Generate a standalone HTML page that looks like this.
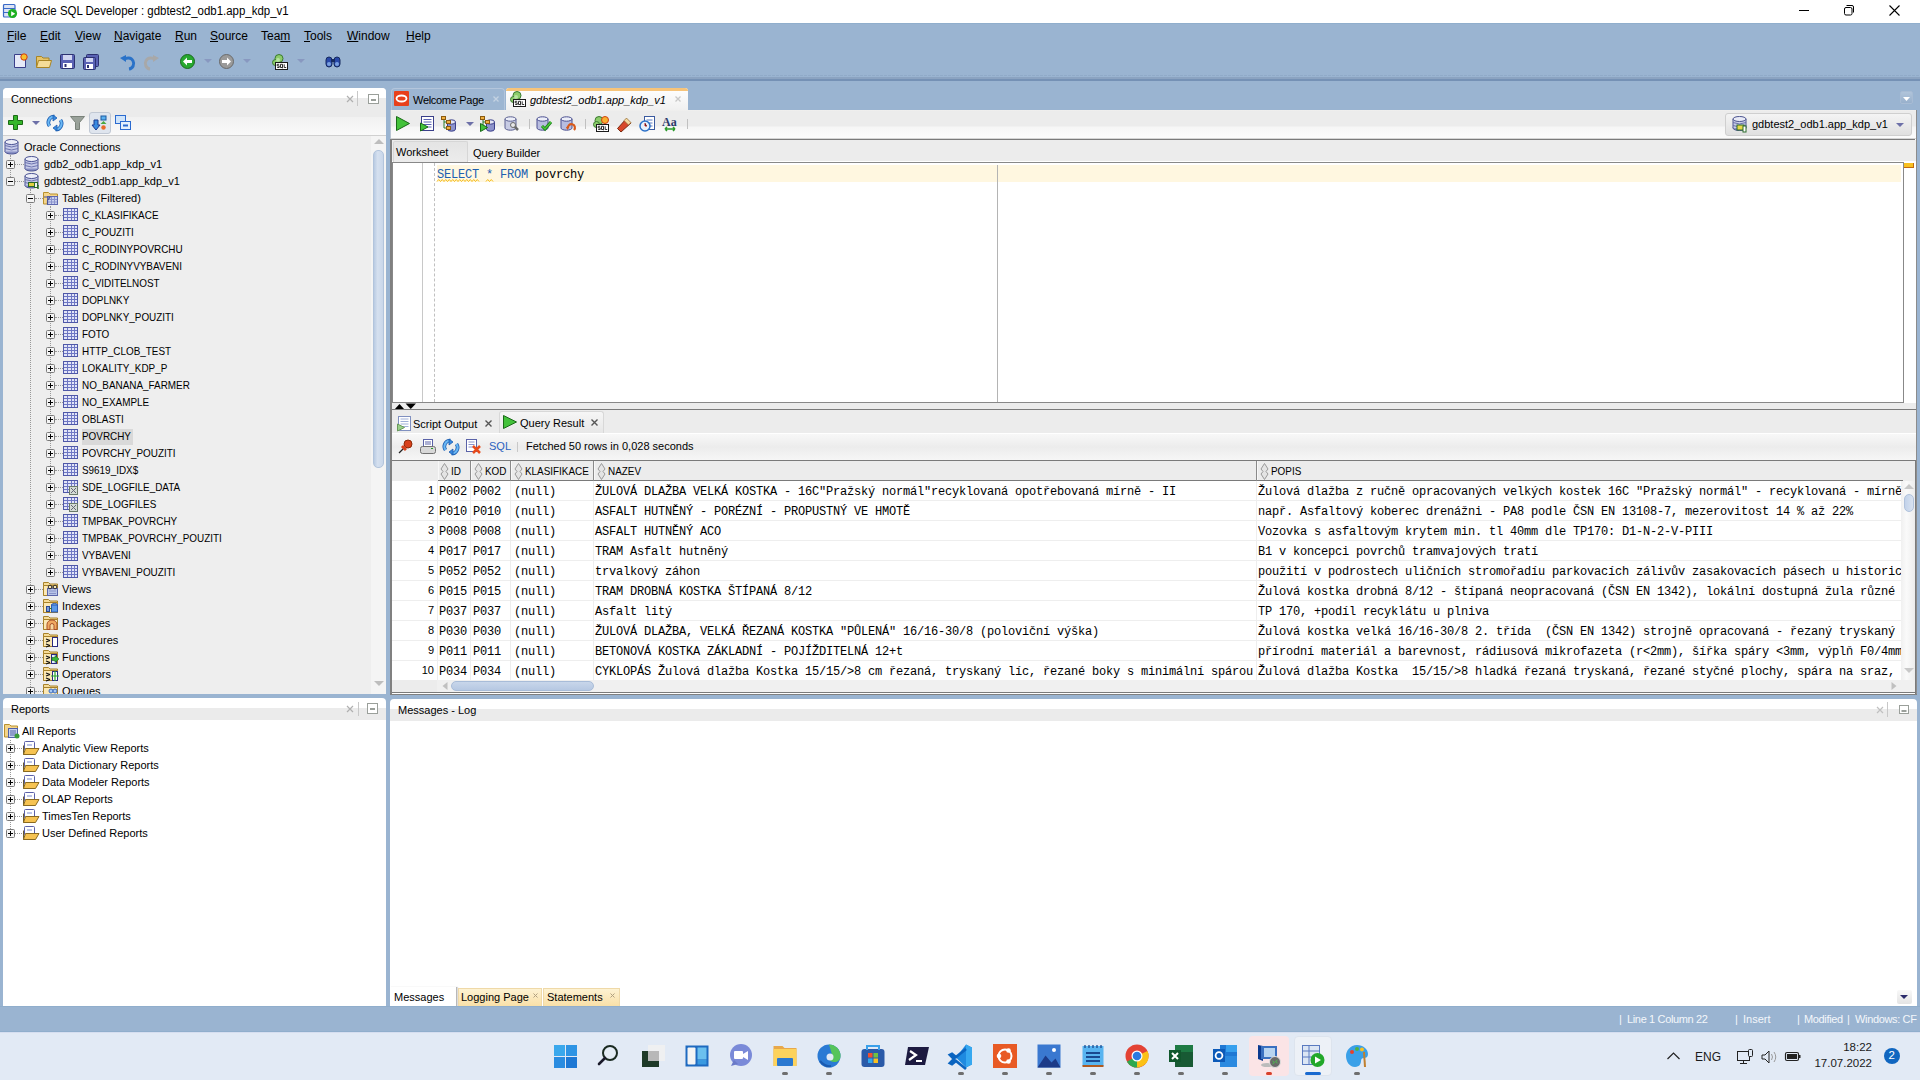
<!DOCTYPE html><html><head><meta charset="utf-8"><style>
*{margin:0;padding:0;box-sizing:border-box}
html,body{width:1920px;height:1080px;overflow:hidden;background:#9ab4d1;font-family:"Liberation Sans",sans-serif;font-size:11px;color:#000}
.a{position:absolute}
.t{position:absolute;white-space:nowrap;line-height:1}
.m{font-family:"Liberation Mono",monospace}
svg{position:absolute;overflow:visible}
u{text-decoration:underline;text-underline-offset:1px}
</style></head><body>
<div class="a" style="left:0px;top:0px;width:1920px;height:23px;background:#fff"></div>
<div class="a" style="left:0px;top:23px;width:1920px;height:1px;background:#90aecc"></div>
<svg style="left:2px;top:3px" width="18" height="18" viewBox="0 0 18 18"><rect x="1.5" y="1.5" width="11.5" height="12.5" rx="1" fill="#dde4f4" stroke="#3a6ac8" stroke-width="1.2"/><path d="M1.5 5.5h11.5M1.5 9.5h11.5" stroke="#3a6ac8" stroke-width="1.2"/><circle cx="10.5" cy="10.5" r="4.6" fill="#1eb020"/><path d="M9.2 8.2l4 2.5-4 2.5z" fill="#fff"/></svg>
<div class="t" style="left:23px;top:5.21px;font-size:12.5px;transform:scaleX(0.916);transform-origin:0 0">Oracle SQL Developer : gdbtest2_odb1.app_kdp_v1</div>
<div class="a" style="left:1799px;top:10px;width:10px;height:1px;background:#000"></div>
<svg style="left:1843px;top:4px" width="12" height="12" viewBox="0 0 12 12"><rect x="1.5" y="3.5" width="7.5" height="7.5" rx="1.5" fill="none" stroke="#000"/><path d="M3.5 1.5h5.5a1.5 1.5 0 0 1 1.5 1.5v5.5" fill="none" stroke="#000"/></svg>
<svg style="left:1889px;top:5px" width="12" height="12" viewBox="0 0 12 12"><path d="M0.5 0.5l10 10M10.5 0.5l-10 10" stroke="#000" stroke-width="1.1"/></svg>
<div class="t" style="left:7px;top:29.84px;font-size:12px;"><u>F</u>ile</div>
<div class="t" style="left:40px;top:29.84px;font-size:12px;"><u>E</u>dit</div>
<div class="t" style="left:75px;top:29.84px;font-size:12px;"><u>V</u>iew</div>
<div class="t" style="left:114px;top:29.84px;font-size:12px;"><u>N</u>avigate</div>
<div class="t" style="left:175px;top:29.84px;font-size:12px;"><u>R</u>un</div>
<div class="t" style="left:210px;top:29.84px;font-size:12px;"><u>S</u>ource</div>
<div class="t" style="left:261px;top:29.84px;font-size:12px;">Tea<u>m</u></div>
<div class="t" style="left:304px;top:29.84px;font-size:12px;"><u>T</u>ools</div>
<div class="t" style="left:347px;top:29.84px;font-size:12px;"><u>W</u>indow</div>
<div class="t" style="left:406px;top:29.84px;font-size:12px;"><u>H</u>elp</div>
<div class="a" style="left:0;top:75px;width:1920px;height:1px;background:repeating-linear-gradient(90deg,#90aac8 0 3px,#9ab4d1 3px 4px)"></div>
<div class="a" style="left:0px;top:77px;width:1920px;height:2px;background:#8ba3c1"></div>
<div class="a" style="left:0px;top:79px;width:1920px;height:2px;background:#7591b5"></div>
<div class="a" style="left:3px;top:88px;width:383px;height:606px;background:#eeeeee;border-radius:4px 4px 0 0;overflow:hidden"></div>
<div class="a" style="left:3px;top:88px;width:383px;height:10px;background:#fff;border-radius:4px 4px 0 0"></div>
<div class="a" style="left:3px;top:98px;width:383px;height:19px;background:#ebebeb"></div>
<div class="a" style="left:3px;top:117px;width:383px;height:18px;background:linear-gradient(#f1f1f1,#fafafa)"></div>
<div class="a" style="left:3px;top:135px;width:383px;height:1px;background:#d0d0d0"></div>
<div class="t" style="left:11px;top:93.98px;font-size:11px;">Connections</div>
<svg style="left:346px;top:95px" width="7" height="7" viewBox="0 0 7 7"><path d="M1 1l6 6M7 1l-6 6" stroke="#b0b0b0" stroke-width="1.2"/></svg>
<div class="a" style="left:357px;top:91px;width:1px;height:15px;background:#c8c8c8"></div>
<svg style="left:368px;top:94px" width="11" height="10" viewBox="0 0 11 10"><rect x="0.5" y="0.5" width="10" height="9" fill="#fff" stroke="#9a9f9a"/><rect x="3" y="5" width="5" height="2" fill="#9a9f9a"/></svg>
<div class="a" style="left:3px;top:136px;width:368px;height:558px;overflow:hidden">
<div class="a" style="left:7px;top:19px;width:1px;height:26px;border-left:1px dotted #999"></div>
<div class="a" style="left:27px;top:53px;width:1px;height:502px;border-left:1px dotted #999"></div>
<div class="a" style="left:47px;top:70px;width:1px;height:366px;border-left:1px dotted #999"></div>
<svg style="left:1px;top:3px" width="16" height="16"><ellipse cx="7.5" cy="12.5" rx="6.5" ry="2.5" fill="#8890c4" stroke="#4b5394"/><rect x="1" y="3" width="13" height="9.5" fill="#c5cae8"/><path d="M1 3v9.5M14 3v9.5" stroke="#4b5394"/><path d="M1 6.5q6.5 3 13 0M1 9.5q6.5 3 13 0" stroke="#6d74b0" fill="none"/><ellipse cx="7.5" cy="3" rx="6.5" ry="2.5" fill="#eceef8" stroke="#4b5394"/></svg>
<div class="t" style="left:21px;top:5.68px;font-size:11px;">Oracle Connections</div>
<div class="a" style="left:12px;top:28px;width:9px;height:1px;border-top:1px dotted #999"></div>
<svg style="left:3px;top:24px" width="9" height="9"><rect x="0.5" y="0.5" width="8" height="8" rx="1" fill="#f4f4f4" stroke="#7a7a7a"/><path d="M2 4.5h5" stroke="#000"/><path d="M4.5 2v5" stroke="#000"/></svg>
<svg style="left:21px;top:20px" width="16" height="16"><ellipse cx="7.5" cy="12.5" rx="6.5" ry="2.5" fill="#8890c4" stroke="#4b5394"/><rect x="1" y="3" width="13" height="9.5" fill="#c5cae8"/><path d="M1 3v9.5M14 3v9.5" stroke="#4b5394"/><path d="M1 6.5q6.5 3 13 0M1 9.5q6.5 3 13 0" stroke="#6d74b0" fill="none"/><ellipse cx="7.5" cy="3" rx="6.5" ry="2.5" fill="#eceef8" stroke="#4b5394"/></svg>
<div class="t" style="left:41px;top:22.68px;font-size:11px;">gdb2_odb1.app_kdp_v1</div>
<div class="a" style="left:12px;top:45px;width:9px;height:1px;border-top:1px dotted #999"></div>
<svg style="left:3px;top:41px" width="9" height="9"><rect x="0.5" y="0.5" width="8" height="8" rx="1" fill="#f4f4f4" stroke="#7a7a7a"/><path d="M2 4.5h5" stroke="#000"/></svg>
<svg style="left:21px;top:37px" width="16" height="16"><ellipse cx="7.5" cy="12.5" rx="6.5" ry="2.5" fill="#8890c4" stroke="#4b5394"/><rect x="1" y="3" width="13" height="9.5" fill="#c5cae8"/><path d="M1 3v9.5M14 3v9.5" stroke="#4b5394"/><path d="M1 6.5q6.5 3 13 0M1 9.5q6.5 3 13 0" stroke="#6d74b0" fill="none"/><ellipse cx="7.5" cy="3" rx="6.5" ry="2.5" fill="#eceef8" stroke="#4b5394"/><rect x="4.5" y="9.5" width="6" height="4" fill="#e0d040" stroke="#2a6a2a"/><rect x="10.5" y="9.5" width="3" height="5" fill="#f4f4f4" stroke="#2a6a2a"/><path d="M14 12v4" stroke="#2a6a2a" stroke-width="1.5"/></svg>
<div class="t" style="left:41px;top:39.68px;font-size:11px;">gdbtest2_odb1.app_kdp_v1</div>
<div class="a" style="left:32px;top:62px;width:8px;height:1px;border-top:1px dotted #999"></div>
<svg style="left:23px;top:58px" width="9" height="9"><rect x="0.5" y="0.5" width="8" height="8" rx="1" fill="#f4f4f4" stroke="#7a7a7a"/><path d="M2 4.5h5" stroke="#000"/></svg>
<svg style="left:40px;top:54px" width="16" height="16"><path d="M0.5 2.5h5l1.5 1.5h7.5v10h-14z" fill="#f4d58a" stroke="#b8902e"/><rect x="4.5" y="6.5" width="10" height="8" fill="#c8d0ee" stroke="#5f68b0"/><path d="M5 9.5h9M5 12h9M8.5 7v7M11.5 7v7" stroke="#8a92cc"/><path d="M1 7h6l-2.5 3.5v4" stroke="#4b5394" fill="none" stroke-width="1.2"/></svg>
<div class="t" style="left:59px;top:56.68px;font-size:11px;">Tables (Filtered)</div>
<div class="a" style="left:52px;top:79px;width:8px;height:1px;border-top:1px dotted #999"></div>
<svg style="left:43px;top:75px" width="9" height="9"><rect x="0.5" y="0.5" width="8" height="8" rx="1" fill="#f4f4f4" stroke="#7a7a7a"/><path d="M2 4.5h5" stroke="#000"/><path d="M4.5 2v5" stroke="#000"/></svg>
<svg style="left:60px;top:71px" width="16" height="16"><rect x="0.5" y="1.5" width="14" height="12" fill="#e2e5f8" stroke="#4f58a8"/><path d="M1 4.5h13M1 7.5h13M1 10.5h13M4.5 2v11M8.5 2v11M11.5 2v11" stroke="#6e77c4"/></svg>
<div class="t" style="left:79px;top:73.68px;font-size:11px;transform:scaleX(0.9);transform-origin:0 0;">C_KLASIFIKACE</div>
<div class="a" style="left:52px;top:96px;width:8px;height:1px;border-top:1px dotted #999"></div>
<svg style="left:43px;top:92px" width="9" height="9"><rect x="0.5" y="0.5" width="8" height="8" rx="1" fill="#f4f4f4" stroke="#7a7a7a"/><path d="M2 4.5h5" stroke="#000"/><path d="M4.5 2v5" stroke="#000"/></svg>
<svg style="left:60px;top:88px" width="16" height="16"><rect x="0.5" y="1.5" width="14" height="12" fill="#e2e5f8" stroke="#4f58a8"/><path d="M1 4.5h13M1 7.5h13M1 10.5h13M4.5 2v11M8.5 2v11M11.5 2v11" stroke="#6e77c4"/></svg>
<div class="t" style="left:79px;top:90.68px;font-size:11px;transform:scaleX(0.9);transform-origin:0 0;">C_POUZITI</div>
<div class="a" style="left:52px;top:113px;width:8px;height:1px;border-top:1px dotted #999"></div>
<svg style="left:43px;top:109px" width="9" height="9"><rect x="0.5" y="0.5" width="8" height="8" rx="1" fill="#f4f4f4" stroke="#7a7a7a"/><path d="M2 4.5h5" stroke="#000"/><path d="M4.5 2v5" stroke="#000"/></svg>
<svg style="left:60px;top:105px" width="16" height="16"><rect x="0.5" y="1.5" width="14" height="12" fill="#e2e5f8" stroke="#4f58a8"/><path d="M1 4.5h13M1 7.5h13M1 10.5h13M4.5 2v11M8.5 2v11M11.5 2v11" stroke="#6e77c4"/></svg>
<div class="t" style="left:79px;top:107.68px;font-size:11px;transform:scaleX(0.9);transform-origin:0 0;">C_RODINYPOVRCHU</div>
<div class="a" style="left:52px;top:130px;width:8px;height:1px;border-top:1px dotted #999"></div>
<svg style="left:43px;top:126px" width="9" height="9"><rect x="0.5" y="0.5" width="8" height="8" rx="1" fill="#f4f4f4" stroke="#7a7a7a"/><path d="M2 4.5h5" stroke="#000"/><path d="M4.5 2v5" stroke="#000"/></svg>
<svg style="left:60px;top:122px" width="16" height="16"><rect x="0.5" y="1.5" width="14" height="12" fill="#e2e5f8" stroke="#4f58a8"/><path d="M1 4.5h13M1 7.5h13M1 10.5h13M4.5 2v11M8.5 2v11M11.5 2v11" stroke="#6e77c4"/></svg>
<div class="t" style="left:79px;top:124.68px;font-size:11px;transform:scaleX(0.9);transform-origin:0 0;">C_RODINYVYBAVENI</div>
<div class="a" style="left:52px;top:147px;width:8px;height:1px;border-top:1px dotted #999"></div>
<svg style="left:43px;top:143px" width="9" height="9"><rect x="0.5" y="0.5" width="8" height="8" rx="1" fill="#f4f4f4" stroke="#7a7a7a"/><path d="M2 4.5h5" stroke="#000"/><path d="M4.5 2v5" stroke="#000"/></svg>
<svg style="left:60px;top:139px" width="16" height="16"><rect x="0.5" y="1.5" width="14" height="12" fill="#e2e5f8" stroke="#4f58a8"/><path d="M1 4.5h13M1 7.5h13M1 10.5h13M4.5 2v11M8.5 2v11M11.5 2v11" stroke="#6e77c4"/></svg>
<div class="t" style="left:79px;top:141.68px;font-size:11px;transform:scaleX(0.9);transform-origin:0 0;">C_VIDITELNOST</div>
<div class="a" style="left:52px;top:164px;width:8px;height:1px;border-top:1px dotted #999"></div>
<svg style="left:43px;top:160px" width="9" height="9"><rect x="0.5" y="0.5" width="8" height="8" rx="1" fill="#f4f4f4" stroke="#7a7a7a"/><path d="M2 4.5h5" stroke="#000"/><path d="M4.5 2v5" stroke="#000"/></svg>
<svg style="left:60px;top:156px" width="16" height="16"><rect x="0.5" y="1.5" width="14" height="12" fill="#e2e5f8" stroke="#4f58a8"/><path d="M1 4.5h13M1 7.5h13M1 10.5h13M4.5 2v11M8.5 2v11M11.5 2v11" stroke="#6e77c4"/></svg>
<div class="t" style="left:79px;top:158.68px;font-size:11px;transform:scaleX(0.9);transform-origin:0 0;">DOPLNKY</div>
<div class="a" style="left:52px;top:181px;width:8px;height:1px;border-top:1px dotted #999"></div>
<svg style="left:43px;top:177px" width="9" height="9"><rect x="0.5" y="0.5" width="8" height="8" rx="1" fill="#f4f4f4" stroke="#7a7a7a"/><path d="M2 4.5h5" stroke="#000"/><path d="M4.5 2v5" stroke="#000"/></svg>
<svg style="left:60px;top:173px" width="16" height="16"><rect x="0.5" y="1.5" width="14" height="12" fill="#e2e5f8" stroke="#4f58a8"/><path d="M1 4.5h13M1 7.5h13M1 10.5h13M4.5 2v11M8.5 2v11M11.5 2v11" stroke="#6e77c4"/></svg>
<div class="t" style="left:79px;top:175.68px;font-size:11px;transform:scaleX(0.9);transform-origin:0 0;">DOPLNKY_POUZITI</div>
<div class="a" style="left:52px;top:198px;width:8px;height:1px;border-top:1px dotted #999"></div>
<svg style="left:43px;top:194px" width="9" height="9"><rect x="0.5" y="0.5" width="8" height="8" rx="1" fill="#f4f4f4" stroke="#7a7a7a"/><path d="M2 4.5h5" stroke="#000"/><path d="M4.5 2v5" stroke="#000"/></svg>
<svg style="left:60px;top:190px" width="16" height="16"><rect x="0.5" y="1.5" width="14" height="12" fill="#e2e5f8" stroke="#4f58a8"/><path d="M1 4.5h13M1 7.5h13M1 10.5h13M4.5 2v11M8.5 2v11M11.5 2v11" stroke="#6e77c4"/></svg>
<div class="t" style="left:79px;top:192.68px;font-size:11px;transform:scaleX(0.9);transform-origin:0 0;">FOTO</div>
<div class="a" style="left:52px;top:215px;width:8px;height:1px;border-top:1px dotted #999"></div>
<svg style="left:43px;top:211px" width="9" height="9"><rect x="0.5" y="0.5" width="8" height="8" rx="1" fill="#f4f4f4" stroke="#7a7a7a"/><path d="M2 4.5h5" stroke="#000"/><path d="M4.5 2v5" stroke="#000"/></svg>
<svg style="left:60px;top:207px" width="16" height="16"><rect x="0.5" y="1.5" width="14" height="12" fill="#e2e5f8" stroke="#4f58a8"/><path d="M1 4.5h13M1 7.5h13M1 10.5h13M4.5 2v11M8.5 2v11M11.5 2v11" stroke="#6e77c4"/></svg>
<div class="t" style="left:79px;top:209.68px;font-size:11px;transform:scaleX(0.9);transform-origin:0 0;">HTTP_CLOB_TEST</div>
<div class="a" style="left:52px;top:232px;width:8px;height:1px;border-top:1px dotted #999"></div>
<svg style="left:43px;top:228px" width="9" height="9"><rect x="0.5" y="0.5" width="8" height="8" rx="1" fill="#f4f4f4" stroke="#7a7a7a"/><path d="M2 4.5h5" stroke="#000"/><path d="M4.5 2v5" stroke="#000"/></svg>
<svg style="left:60px;top:224px" width="16" height="16"><rect x="0.5" y="1.5" width="14" height="12" fill="#e2e5f8" stroke="#4f58a8"/><path d="M1 4.5h13M1 7.5h13M1 10.5h13M4.5 2v11M8.5 2v11M11.5 2v11" stroke="#6e77c4"/></svg>
<div class="t" style="left:79px;top:226.68px;font-size:11px;transform:scaleX(0.9);transform-origin:0 0;">LOKALITY_KDP_P</div>
<div class="a" style="left:52px;top:249px;width:8px;height:1px;border-top:1px dotted #999"></div>
<svg style="left:43px;top:245px" width="9" height="9"><rect x="0.5" y="0.5" width="8" height="8" rx="1" fill="#f4f4f4" stroke="#7a7a7a"/><path d="M2 4.5h5" stroke="#000"/><path d="M4.5 2v5" stroke="#000"/></svg>
<svg style="left:60px;top:241px" width="16" height="16"><rect x="0.5" y="1.5" width="14" height="12" fill="#e2e5f8" stroke="#4f58a8"/><path d="M1 4.5h13M1 7.5h13M1 10.5h13M4.5 2v11M8.5 2v11M11.5 2v11" stroke="#6e77c4"/></svg>
<div class="t" style="left:79px;top:243.68px;font-size:11px;transform:scaleX(0.9);transform-origin:0 0;">NO_BANANA_FARMER</div>
<div class="a" style="left:52px;top:266px;width:8px;height:1px;border-top:1px dotted #999"></div>
<svg style="left:43px;top:262px" width="9" height="9"><rect x="0.5" y="0.5" width="8" height="8" rx="1" fill="#f4f4f4" stroke="#7a7a7a"/><path d="M2 4.5h5" stroke="#000"/><path d="M4.5 2v5" stroke="#000"/></svg>
<svg style="left:60px;top:258px" width="16" height="16"><rect x="0.5" y="1.5" width="14" height="12" fill="#e2e5f8" stroke="#4f58a8"/><path d="M1 4.5h13M1 7.5h13M1 10.5h13M4.5 2v11M8.5 2v11M11.5 2v11" stroke="#6e77c4"/></svg>
<div class="t" style="left:79px;top:260.68px;font-size:11px;transform:scaleX(0.9);transform-origin:0 0;">NO_EXAMPLE</div>
<div class="a" style="left:52px;top:283px;width:8px;height:1px;border-top:1px dotted #999"></div>
<svg style="left:43px;top:279px" width="9" height="9"><rect x="0.5" y="0.5" width="8" height="8" rx="1" fill="#f4f4f4" stroke="#7a7a7a"/><path d="M2 4.5h5" stroke="#000"/><path d="M4.5 2v5" stroke="#000"/></svg>
<svg style="left:60px;top:275px" width="16" height="16"><rect x="0.5" y="1.5" width="14" height="12" fill="#e2e5f8" stroke="#4f58a8"/><path d="M1 4.5h13M1 7.5h13M1 10.5h13M4.5 2v11M8.5 2v11M11.5 2v11" stroke="#6e77c4"/></svg>
<div class="t" style="left:79px;top:277.68px;font-size:11px;transform:scaleX(0.9);transform-origin:0 0;">OBLASTI</div>
<div class="a" style="left:52px;top:300px;width:8px;height:1px;border-top:1px dotted #999"></div>
<svg style="left:43px;top:296px" width="9" height="9"><rect x="0.5" y="0.5" width="8" height="8" rx="1" fill="#f4f4f4" stroke="#7a7a7a"/><path d="M2 4.5h5" stroke="#000"/><path d="M4.5 2v5" stroke="#000"/></svg>
<svg style="left:60px;top:292px" width="16" height="16"><rect x="0.5" y="1.5" width="14" height="12" fill="#e2e5f8" stroke="#4f58a8"/><path d="M1 4.5h13M1 7.5h13M1 10.5h13M4.5 2v11M8.5 2v11M11.5 2v11" stroke="#6e77c4"/></svg>
<div class="a" style="left:79px;top:293px;width:51px;height:16px;background:#d9d9d9"></div>
<div class="t" style="left:79px;top:294.68px;font-size:11px;transform:scaleX(0.9);transform-origin:0 0;">POVRCHY</div>
<div class="a" style="left:52px;top:317px;width:8px;height:1px;border-top:1px dotted #999"></div>
<svg style="left:43px;top:313px" width="9" height="9"><rect x="0.5" y="0.5" width="8" height="8" rx="1" fill="#f4f4f4" stroke="#7a7a7a"/><path d="M2 4.5h5" stroke="#000"/><path d="M4.5 2v5" stroke="#000"/></svg>
<svg style="left:60px;top:309px" width="16" height="16"><rect x="0.5" y="1.5" width="14" height="12" fill="#e2e5f8" stroke="#4f58a8"/><path d="M1 4.5h13M1 7.5h13M1 10.5h13M4.5 2v11M8.5 2v11M11.5 2v11" stroke="#6e77c4"/></svg>
<div class="t" style="left:79px;top:311.68px;font-size:11px;transform:scaleX(0.9);transform-origin:0 0;">POVRCHY_POUZITI</div>
<div class="a" style="left:52px;top:334px;width:8px;height:1px;border-top:1px dotted #999"></div>
<svg style="left:43px;top:330px" width="9" height="9"><rect x="0.5" y="0.5" width="8" height="8" rx="1" fill="#f4f4f4" stroke="#7a7a7a"/><path d="M2 4.5h5" stroke="#000"/><path d="M4.5 2v5" stroke="#000"/></svg>
<svg style="left:60px;top:326px" width="16" height="16"><rect x="0.5" y="1.5" width="14" height="12" fill="#e2e5f8" stroke="#4f58a8"/><path d="M1 4.5h13M1 7.5h13M1 10.5h13M4.5 2v11M8.5 2v11M11.5 2v11" stroke="#6e77c4"/></svg>
<div class="t" style="left:79px;top:328.68px;font-size:11px;transform:scaleX(0.9);transform-origin:0 0;">S9619_IDX$</div>
<div class="a" style="left:52px;top:351px;width:8px;height:1px;border-top:1px dotted #999"></div>
<svg style="left:43px;top:347px" width="9" height="9"><rect x="0.5" y="0.5" width="8" height="8" rx="1" fill="#f4f4f4" stroke="#7a7a7a"/><path d="M2 4.5h5" stroke="#000"/><path d="M4.5 2v5" stroke="#000"/></svg>
<svg style="left:60px;top:343px" width="16" height="16"><rect x="0.5" y="1.5" width="14" height="12" fill="#e2e5f8" stroke="#4f58a8"/><path d="M1 4.5h13M1 7.5h13M1 10.5h13M4.5 2v11M8.5 2v11M11.5 2v11" stroke="#6e77c4"/><rect x="6.5" y="7.5" width="8" height="8" fill="#d4dcd4" stroke="#6a7a6a"/><path d="M8 9l5 5M13 9l-5 5" stroke="#667"/></svg>
<div class="t" style="left:79px;top:345.68px;font-size:11px;transform:scaleX(0.9);transform-origin:0 0;">SDE_LOGFILE_DATA</div>
<div class="a" style="left:52px;top:368px;width:8px;height:1px;border-top:1px dotted #999"></div>
<svg style="left:43px;top:364px" width="9" height="9"><rect x="0.5" y="0.5" width="8" height="8" rx="1" fill="#f4f4f4" stroke="#7a7a7a"/><path d="M2 4.5h5" stroke="#000"/><path d="M4.5 2v5" stroke="#000"/></svg>
<svg style="left:60px;top:360px" width="16" height="16"><rect x="0.5" y="1.5" width="14" height="12" fill="#e2e5f8" stroke="#4f58a8"/><path d="M1 4.5h13M1 7.5h13M1 10.5h13M4.5 2v11M8.5 2v11M11.5 2v11" stroke="#6e77c4"/><rect x="6.5" y="7.5" width="8" height="8" fill="#d4dcd4" stroke="#6a7a6a"/><path d="M8 9l5 5M13 9l-5 5" stroke="#667"/></svg>
<div class="t" style="left:79px;top:362.68px;font-size:11px;transform:scaleX(0.9);transform-origin:0 0;">SDE_LOGFILES</div>
<div class="a" style="left:52px;top:385px;width:8px;height:1px;border-top:1px dotted #999"></div>
<svg style="left:43px;top:381px" width="9" height="9"><rect x="0.5" y="0.5" width="8" height="8" rx="1" fill="#f4f4f4" stroke="#7a7a7a"/><path d="M2 4.5h5" stroke="#000"/><path d="M4.5 2v5" stroke="#000"/></svg>
<svg style="left:60px;top:377px" width="16" height="16"><rect x="0.5" y="1.5" width="14" height="12" fill="#e2e5f8" stroke="#4f58a8"/><path d="M1 4.5h13M1 7.5h13M1 10.5h13M4.5 2v11M8.5 2v11M11.5 2v11" stroke="#6e77c4"/></svg>
<div class="t" style="left:79px;top:379.68px;font-size:11px;transform:scaleX(0.9);transform-origin:0 0;">TMPBAK_POVRCHY</div>
<div class="a" style="left:52px;top:402px;width:8px;height:1px;border-top:1px dotted #999"></div>
<svg style="left:43px;top:398px" width="9" height="9"><rect x="0.5" y="0.5" width="8" height="8" rx="1" fill="#f4f4f4" stroke="#7a7a7a"/><path d="M2 4.5h5" stroke="#000"/><path d="M4.5 2v5" stroke="#000"/></svg>
<svg style="left:60px;top:394px" width="16" height="16"><rect x="0.5" y="1.5" width="14" height="12" fill="#e2e5f8" stroke="#4f58a8"/><path d="M1 4.5h13M1 7.5h13M1 10.5h13M4.5 2v11M8.5 2v11M11.5 2v11" stroke="#6e77c4"/></svg>
<div class="t" style="left:79px;top:396.68px;font-size:11px;transform:scaleX(0.9);transform-origin:0 0;">TMPBAK_POVRCHY_POUZITI</div>
<div class="a" style="left:52px;top:419px;width:8px;height:1px;border-top:1px dotted #999"></div>
<svg style="left:43px;top:415px" width="9" height="9"><rect x="0.5" y="0.5" width="8" height="8" rx="1" fill="#f4f4f4" stroke="#7a7a7a"/><path d="M2 4.5h5" stroke="#000"/><path d="M4.5 2v5" stroke="#000"/></svg>
<svg style="left:60px;top:411px" width="16" height="16"><rect x="0.5" y="1.5" width="14" height="12" fill="#e2e5f8" stroke="#4f58a8"/><path d="M1 4.5h13M1 7.5h13M1 10.5h13M4.5 2v11M8.5 2v11M11.5 2v11" stroke="#6e77c4"/></svg>
<div class="t" style="left:79px;top:413.68px;font-size:11px;transform:scaleX(0.9);transform-origin:0 0;">VYBAVENI</div>
<div class="a" style="left:52px;top:436px;width:8px;height:1px;border-top:1px dotted #999"></div>
<svg style="left:43px;top:432px" width="9" height="9"><rect x="0.5" y="0.5" width="8" height="8" rx="1" fill="#f4f4f4" stroke="#7a7a7a"/><path d="M2 4.5h5" stroke="#000"/><path d="M4.5 2v5" stroke="#000"/></svg>
<svg style="left:60px;top:428px" width="16" height="16"><rect x="0.5" y="1.5" width="14" height="12" fill="#e2e5f8" stroke="#4f58a8"/><path d="M1 4.5h13M1 7.5h13M1 10.5h13M4.5 2v11M8.5 2v11M11.5 2v11" stroke="#6e77c4"/></svg>
<div class="t" style="left:79px;top:430.68px;font-size:11px;transform:scaleX(0.9);transform-origin:0 0;">VYBAVENI_POUZITI</div>
<div class="a" style="left:32px;top:453px;width:8px;height:1px;border-top:1px dotted #999"></div>
<svg style="left:23px;top:449px" width="9" height="9"><rect x="0.5" y="0.5" width="8" height="8" rx="1" fill="#f4f4f4" stroke="#7a7a7a"/><path d="M2 4.5h5" stroke="#000"/><path d="M4.5 2v5" stroke="#000"/></svg>
<svg style="left:40px;top:445px" width="16" height="16"><path d="M0.5 1.5h5l1.5 1.5h7.5v11.5h-14z" fill="#f6dc98" stroke="#a8822a"/><path d="M0.5 4.5h14v10h-14z" fill="#fbe8b4" stroke="#a8822a"/><rect x="4.5" y="7.5" width="10" height="7" fill="#b8c4e8" stroke="#5a64a8"/><path d="M6 10h7M6 12.5h7" stroke="#8a94c8"/><circle cx="7" cy="6" r="1.8" fill="none" stroke="#333"/><circle cx="12" cy="6" r="1.8" fill="none" stroke="#333"/><path d="M8.8 6h1.4" stroke="#333"/></svg>
<div class="t" style="left:59px;top:447.68px;font-size:11px;">Views</div>
<div class="a" style="left:32px;top:470px;width:8px;height:1px;border-top:1px dotted #999"></div>
<svg style="left:23px;top:466px" width="9" height="9"><rect x="0.5" y="0.5" width="8" height="8" rx="1" fill="#f4f4f4" stroke="#7a7a7a"/><path d="M2 4.5h5" stroke="#000"/><path d="M4.5 2v5" stroke="#000"/></svg>
<svg style="left:40px;top:462px" width="16" height="16"><path d="M0.5 1.5h5l1.5 1.5h7.5v11.5h-14z" fill="#f6dc98" stroke="#a8822a"/><path d="M0.5 4.5h14v10h-14z" fill="#fbe8b4" stroke="#a8822a"/><rect x="3.5" y="8.5" width="3" height="5" fill="#7a9ae0" stroke="#2a4a90"/><ellipse cx="11.5" cy="7" rx="3" ry="1.5" fill="#8ac0f0" stroke="#2a5ab0"/><rect x="8.5" y="7" width="6" height="7" fill="#5a9ae8" stroke="#2a5ab0"/><path d="M6.5 10.5h2" stroke="#2a7a2a"/></svg>
<div class="t" style="left:59px;top:464.68px;font-size:11px;">Indexes</div>
<div class="a" style="left:32px;top:487px;width:8px;height:1px;border-top:1px dotted #999"></div>
<svg style="left:23px;top:483px" width="9" height="9"><rect x="0.5" y="0.5" width="8" height="8" rx="1" fill="#f4f4f4" stroke="#7a7a7a"/><path d="M2 4.5h5" stroke="#000"/><path d="M4.5 2v5" stroke="#000"/></svg>
<svg style="left:40px;top:479px" width="16" height="16"><path d="M0.5 1.5h5l1.5 1.5h7.5v11.5h-14z" fill="#f6dc98" stroke="#a8822a"/><path d="M0.5 4.5h14v10h-14z" fill="#fbe8b4" stroke="#a8822a"/><path d="M4 14.5v-5a5 4.5 0 0 1 10 0v5z" fill="#f0a860" stroke="#a8502a"/><path d="M7 14.5v-4a2 2 0 0 1 4 0v4" fill="#f8d8a0" stroke="#a8502a"/></svg>
<div class="t" style="left:59px;top:481.68px;font-size:11px;">Packages</div>
<div class="a" style="left:32px;top:504px;width:8px;height:1px;border-top:1px dotted #999"></div>
<svg style="left:23px;top:500px" width="9" height="9"><rect x="0.5" y="0.5" width="8" height="8" rx="1" fill="#f4f4f4" stroke="#7a7a7a"/><path d="M2 4.5h5" stroke="#000"/><path d="M4.5 2v5" stroke="#000"/></svg>
<svg style="left:40px;top:496px" width="16" height="16"><path d="M0.5 1.5h5l1.5 1.5h7.5v11.5h-14z" fill="#f6dc98" stroke="#a8822a"/><path d="M0.5 4.5h14v10h-14z" fill="#fbe8b4" stroke="#a8822a"/><rect x="9.5" y="5.5" width="5" height="9" fill="#fff" stroke="#2a2a80"/><path d="M3 7l4 1.5M3 10l4-1.5M3 12l4 1.5M3 15l4-1.5" stroke="#111" stroke-width="1.1"/></svg>
<div class="t" style="left:59px;top:498.68px;font-size:11px;">Procedures</div>
<div class="a" style="left:32px;top:521px;width:8px;height:1px;border-top:1px dotted #999"></div>
<svg style="left:23px;top:517px" width="9" height="9"><rect x="0.5" y="0.5" width="8" height="8" rx="1" fill="#f4f4f4" stroke="#7a7a7a"/><path d="M2 4.5h5" stroke="#000"/><path d="M4.5 2v5" stroke="#000"/></svg>
<svg style="left:40px;top:513px" width="16" height="16"><path d="M0.5 1.5h5l1.5 1.5h7.5v11.5h-14z" fill="#f6dc98" stroke="#a8822a"/><path d="M0.5 4.5h14v10h-14z" fill="#fbe8b4" stroke="#a8822a"/><rect x="8.5" y="5.5" width="5" height="9" fill="#e0e8ff" stroke="#2a2a80"/><path d="M3 7l4 1.5M3 10l4-1.5M3 12l4 1.5M3 15l4-1.5" stroke="#111" stroke-width="1.1"/><path d="M9 8.5h3v-2l4 3.5-4 3.5v-2h-3z" fill="#3ab83a" stroke="#1a6a1a" stroke-width="0.6"/></svg>
<div class="t" style="left:59px;top:515.68px;font-size:11px;">Functions</div>
<div class="a" style="left:32px;top:538px;width:8px;height:1px;border-top:1px dotted #999"></div>
<svg style="left:23px;top:534px" width="9" height="9"><rect x="0.5" y="0.5" width="8" height="8" rx="1" fill="#f4f4f4" stroke="#7a7a7a"/><path d="M2 4.5h5" stroke="#000"/><path d="M4.5 2v5" stroke="#000"/></svg>
<svg style="left:40px;top:530px" width="16" height="16"><path d="M0.5 1.5h5l1.5 1.5h7.5v11.5h-14z" fill="#f6dc98" stroke="#a8822a"/><path d="M0.5 4.5h14v10h-14z" fill="#fbe8b4" stroke="#a8822a"/><rect x="9.5" y="5.5" width="5" height="9" fill="#fff" stroke="#2a2a80"/><path d="M3 7l4 1.5M3 10l4-1.5M3 12l4 1.5M3 15l4-1.5" stroke="#111" stroke-width="1.1"/><path d="M12 5v10M8 10h8" stroke="#2aa82a" stroke-width="1.2"/></svg>
<div class="t" style="left:59px;top:532.68px;font-size:11px;">Operators</div>
<div class="a" style="left:32px;top:555px;width:8px;height:1px;border-top:1px dotted #999"></div>
<svg style="left:23px;top:551px" width="9" height="9"><rect x="0.5" y="0.5" width="8" height="8" rx="1" fill="#f4f4f4" stroke="#7a7a7a"/><path d="M2 4.5h5" stroke="#000"/><path d="M4.5 2v5" stroke="#000"/></svg>
<svg style="left:40px;top:547px" width="16" height="16"><path d="M0.5 1.5h5l1.5 1.5h7.5v11.5h-14z" fill="#f6dc98" stroke="#a8822a"/><path d="M0.5 4.5h14v10h-14z" fill="#fbe8b4" stroke="#a8822a"/><circle cx="8" cy="8" r="2" fill="#a8c8f0" stroke="#3a6ac0"/><circle cx="12" cy="8" r="2" fill="#a8c8f0" stroke="#3a6ac0"/><path d="M5.5 15a2.5 3 0 0 1 5 0M9.5 15a2.5 3 0 0 1 5 0" fill="#a8c8f0" stroke="#3a6ac0"/></svg>
<div class="t" style="left:59px;top:549.68px;font-size:11px;">Queues</div>
</div>
<div class="a" style="left:371px;top:136px;width:15px;height:558px;background:#f4f4f4"></div>
<svg style="left:374px;top:139px" width="10" height="5" viewBox="0 0 10 5"><path d="M0 5l5-5 5 5z" fill="#bdbdbd"/></svg>
<div class="a" style="left:373px;top:150px;width:11px;height:318px;background:linear-gradient(90deg,#b9cbe3,#d5e0ef 40%,#c9d7ea);border-radius:5px;border:1px solid #b2c4dc"></div>
<svg style="left:374px;top:681px" width="10" height="6" viewBox="0 0 10 6"><path d="M0 0l5 5 5-5z" fill="#bdbdbd"/></svg>
<div class="a" style="left:3px;top:698px;width:383px;height:308px;background:#fff;border-radius:4px 4px 0 0"></div>
<div class="a" style="left:3px;top:708px;width:383px;height:12px;background:#ebebeb"></div>
<div class="t" style="left:11px;top:703.68px;font-size:11px;">Reports</div>
<svg style="left:346px;top:705px" width="8" height="8" viewBox="0 0 8 8"><path d="M1 1l6 6M7 1l-6 6" stroke="#b0b0b0" stroke-width="1.2"/></svg>
<div class="a" style="left:358px;top:702px;width:1px;height:14px;background:#c8c8c8"></div>
<svg style="left:367px;top:703px" width="11" height="11" viewBox="0 0 11 11"><rect x="0.5" y="0.5" width="10" height="10" fill="#fff" stroke="#9a9f9a"/><rect x="3" y="5" width="5" height="2" fill="#9a9f9a"/></svg>
<svg style="left:4px;top:723px" width="16" height="16" viewBox="0 0 16 16"><path d="M0.5 1.5h5l1.5 1.5h6.5v11h-13z" fill="#f4d58a" stroke="#b8902e"/><rect x="4.5" y="5.5" width="9" height="9" fill="#c8d4ee" stroke="#5060a8"/><path d="M6 8h6M6 10h6M6 12h6" stroke="#5060a8"/><circle cx="13" cy="13" r="2.5" fill="#3a9a3a"/></svg>
<div class="t" style="left:22px;top:725.98px;font-size:11px;">All Reports</div>
<div class="a" style="left:10px;top:740px;width:1px;height:93px;border-left:1px dotted #999"></div>
<div class="a" style="left:15px;top:748px;width:7px;height:1px;border-top:1px dotted #999"></div>
<svg style="left:6px;top:744px" width="9" height="9" viewBox="0 0 9 9"><rect x="0.5" y="0.5" width="8" height="8" rx="1" fill="#f4f4f4" stroke="#7a7a7a"/><path d="M2 4.5h5M4.5 2v5" stroke="#000"/></svg>
<svg style="left:23px;top:741px" width="17" height="15" viewBox="0 0 17 15"><path d="M0.5 4.5v9h2" fill="none" stroke="#6a5a30"/><rect x="1.5" y="0.5" width="10" height="9" rx="1" fill="#fff" stroke="#5a60a8"/><path d="M4 4h5" stroke="#7a8ad0"/><path d="M2.5 7.5h13.5l-3.5 6h-12z" fill="#f6c352" stroke="#8a6a20"/></svg>
<div class="t" style="left:42px;top:742.68px;font-size:11px;">Analytic View Reports</div>
<div class="a" style="left:15px;top:765px;width:7px;height:1px;border-top:1px dotted #999"></div>
<svg style="left:6px;top:761px" width="9" height="9" viewBox="0 0 9 9"><rect x="0.5" y="0.5" width="8" height="8" rx="1" fill="#f4f4f4" stroke="#7a7a7a"/><path d="M2 4.5h5M4.5 2v5" stroke="#000"/></svg>
<svg style="left:23px;top:758px" width="17" height="15" viewBox="0 0 17 15"><path d="M0.5 4.5v9h2" fill="none" stroke="#6a5a30"/><rect x="1.5" y="0.5" width="10" height="9" rx="1" fill="#fff" stroke="#5a60a8"/><path d="M4 4h5" stroke="#7a8ad0"/><path d="M2.5 7.5h13.5l-3.5 6h-12z" fill="#f6c352" stroke="#8a6a20"/></svg>
<div class="t" style="left:42px;top:759.68px;font-size:11px;">Data Dictionary Reports</div>
<div class="a" style="left:15px;top:782px;width:7px;height:1px;border-top:1px dotted #999"></div>
<svg style="left:6px;top:778px" width="9" height="9" viewBox="0 0 9 9"><rect x="0.5" y="0.5" width="8" height="8" rx="1" fill="#f4f4f4" stroke="#7a7a7a"/><path d="M2 4.5h5M4.5 2v5" stroke="#000"/></svg>
<svg style="left:23px;top:775px" width="17" height="15" viewBox="0 0 17 15"><path d="M0.5 4.5v9h2" fill="none" stroke="#6a5a30"/><rect x="1.5" y="0.5" width="10" height="9" rx="1" fill="#fff" stroke="#5a60a8"/><path d="M4 4h5" stroke="#7a8ad0"/><path d="M2.5 7.5h13.5l-3.5 6h-12z" fill="#f6c352" stroke="#8a6a20"/></svg>
<div class="t" style="left:42px;top:776.68px;font-size:11px;">Data Modeler Reports</div>
<div class="a" style="left:15px;top:799px;width:7px;height:1px;border-top:1px dotted #999"></div>
<svg style="left:6px;top:795px" width="9" height="9" viewBox="0 0 9 9"><rect x="0.5" y="0.5" width="8" height="8" rx="1" fill="#f4f4f4" stroke="#7a7a7a"/><path d="M2 4.5h5M4.5 2v5" stroke="#000"/></svg>
<svg style="left:23px;top:792px" width="17" height="15" viewBox="0 0 17 15"><path d="M0.5 4.5v9h2" fill="none" stroke="#6a5a30"/><rect x="1.5" y="0.5" width="10" height="9" rx="1" fill="#fff" stroke="#5a60a8"/><path d="M4 4h5" stroke="#7a8ad0"/><path d="M2.5 7.5h13.5l-3.5 6h-12z" fill="#f6c352" stroke="#8a6a20"/></svg>
<div class="t" style="left:42px;top:793.68px;font-size:11px;">OLAP Reports</div>
<div class="a" style="left:15px;top:816px;width:7px;height:1px;border-top:1px dotted #999"></div>
<svg style="left:6px;top:812px" width="9" height="9" viewBox="0 0 9 9"><rect x="0.5" y="0.5" width="8" height="8" rx="1" fill="#f4f4f4" stroke="#7a7a7a"/><path d="M2 4.5h5M4.5 2v5" stroke="#000"/></svg>
<svg style="left:23px;top:809px" width="17" height="15" viewBox="0 0 17 15"><path d="M0.5 4.5v9h2" fill="none" stroke="#6a5a30"/><rect x="1.5" y="0.5" width="10" height="9" rx="1" fill="#fff" stroke="#5a60a8"/><path d="M4 4h5" stroke="#7a8ad0"/><path d="M2.5 7.5h13.5l-3.5 6h-12z" fill="#f6c352" stroke="#8a6a20"/></svg>
<div class="t" style="left:42px;top:810.68px;font-size:11px;">TimesTen Reports</div>
<div class="a" style="left:15px;top:833px;width:7px;height:1px;border-top:1px dotted #999"></div>
<svg style="left:6px;top:829px" width="9" height="9" viewBox="0 0 9 9"><rect x="0.5" y="0.5" width="8" height="8" rx="1" fill="#f4f4f4" stroke="#7a7a7a"/><path d="M2 4.5h5M4.5 2v5" stroke="#000"/></svg>
<svg style="left:23px;top:826px" width="17" height="15" viewBox="0 0 17 15"><path d="M0.5 4.5v9h2" fill="none" stroke="#6a5a30"/><rect x="1.5" y="0.5" width="10" height="9" rx="1" fill="#fff" stroke="#5a60a8"/><path d="M4 4h5" stroke="#7a8ad0"/><path d="M2.5 7.5h13.5l-3.5 6h-12z" fill="#f6c352" stroke="#8a6a20"/></svg>
<div class="t" style="left:42px;top:827.68px;font-size:11px;">User Defined Reports</div>
<svg style="left:13px;top:53px" width="18" height="18" viewBox="0 0 18 18"><path d="M1.5 1.5h8l3 3v10h-11z" fill="#e6eaf8" stroke="#3a3f8a"/><circle cx="11" cy="4" r="3.2" fill="#f6c02c" stroke="#d23c10" stroke-width="1"/></svg>
<svg style="left:36px;top:55px" width="17" height="14" viewBox="0 0 17 14"><path d="M0.5 1.5h5l1.5 1.5h6v9h-12.5z" fill="#e6c46a" stroke="#a88424"/><path d="M2.5 5.5h13l-2 7h-13z" fill="#f4dc98" stroke="#a88424"/></svg>
<svg style="left:60px;top:54px" width="16" height="16" viewBox="0 0 16 16"><rect x="0.5" y="0.5" width="14" height="14" rx="1" fill="#5a62b4" stroke="#2c3170"/><rect x="3" y="1" width="9" height="5" fill="#cfd4f0"/><rect x="3" y="9" width="9" height="5" fill="#fff"/><rect x="4.5" y="10" width="2" height="3" fill="#2c3170"/></svg>
<svg style="left:83px;top:54px" width="17" height="16" viewBox="0 0 17 16"><rect x="3.5" y="0.5" width="12" height="12" rx="1" fill="#5a62b4" stroke="#2c3170"/><rect x="0.5" y="3.5" width="12" height="12" rx="1" fill="#5a62b4" stroke="#2c3170"/><rect x="3" y="4" width="7" height="4" fill="#cfd4f0"/><rect x="3" y="10" width="7" height="5" fill="#fff"/><rect x="4" y="11" width="2" height="3" fill="#2c3170"/></svg>
<svg style="left:120px;top:54px" width="16" height="16" viewBox="0 0 16 16"><path d="M4 6a5.5 5.5 0 1 1 5 9" fill="none" stroke="#2a72c8" stroke-width="3"/><path d="M0 4l6-3 0 7z" fill="#2a72c8"/></svg>
<svg style="left:143px;top:54px" width="16" height="16" viewBox="0 0 16 16"><path d="M12 6a5.5 5.5 0 1 0-5 9" fill="none" stroke="#a8a8a8" stroke-width="3"/><path d="M16 4l-6-3 0 7z" fill="#a8a8a8"/></svg>
<svg style="left:180px;top:54px" width="16" height="16" viewBox="0 0 16 16"><circle cx="7.5" cy="7.5" r="7" fill="#27a830" stroke="#1a6a1e"/><path d="M3 7.5l4-4v2.5h5v3h-5v2.5z" fill="#fff"/></svg>
<svg style="left:204px;top:59px" width="8" height="5" viewBox="0 0 8 5"><path d="M0 0h8l-4 4z" fill="#8898c0"/></svg>
<svg style="left:219px;top:54px" width="16" height="16" viewBox="0 0 16 16"><circle cx="7.5" cy="7.5" r="7" fill="#9a9a9a" stroke="#6a6a6a"/><path d="M12 7.5l-4-4v2.5h-5v3h5v2.5z" fill="#fff"/></svg>
<svg style="left:243px;top:59px" width="8" height="5" viewBox="0 0 8 5"><path d="M0 0h8l-4 4z" fill="#8898c0"/></svg>
<svg style="left:272px;top:54px" width="17" height="17" viewBox="0 0 17 17"><circle cx="7" cy="4.5" r="4" fill="#8ccc6a" stroke="#3a7a30"/><circle cx="3.5" cy="8.5" r="3" fill="#8ccc6a" stroke="#3a7a30"/><circle cx="6" cy="6" r="2" fill="#b8e4a0"/><rect x="3.5" y="8.5" width="12" height="7" fill="#fff" stroke="#1a1a1a"/><path d="M7.2 10.3H5.2v1.6h2v1.6h-2M8.5 10.3h2v3.2h-2zM10.2 13.5l0.8 0.8M12.2 10.3v3.2h2" stroke="#1a1a1a" stroke-width="0.9" fill="none"/></svg>
<svg style="left:297px;top:59px" width="8" height="5" viewBox="0 0 8 5"><path d="M0 0h8l-4 4z" fill="#8898c0"/></svg>
<svg style="left:325px;top:54px" width="16" height="16" viewBox="0 0 16 16"><rect x="1" y="3" width="6" height="10" rx="3" fill="#2848a8" stroke="#162a60"/><rect x="9" y="3" width="6" height="10" rx="3" fill="#2848a8" stroke="#162a60"/><rect x="6" y="5" width="4" height="3" fill="#162a60"/><circle cx="4" cy="10" r="2" fill="#7aa0e0"/><circle cx="12" cy="10" r="2" fill="#7aa0e0"/></svg>
<svg style="left:8px;top:115px" width="16" height="16" viewBox="0 0 16 16"><path d="M5.5 0.5h4v5h5v4h-5v5h-4v-5h-5v-4h5z" fill="#36b62a" stroke="#1a6a14"/></svg>
<svg style="left:32px;top:121px" width="9" height="5" viewBox="0 0 9 5"><path d="M0 0h8l-4 4z" fill="#6d70a8"/></svg>
<svg style="left:47px;top:115px" width="16" height="16" viewBox="0 0 16 16"><path d="M7.5 1.5a6 6 0 0 0-5 9.5" fill="none" stroke="#1b5cb0" stroke-width="3.6"/><path d="M7.5 1.5a6 6 0 0 0-5 9.5" fill="none" stroke="#6ab8f4" stroke-width="2"/><path d="M8.5 14.5a6 6 0 0 0 5-9.5" fill="none" stroke="#1b5cb0" stroke-width="3.6"/><path d="M8.5 14.5a6 6 0 0 0 5-9.5" fill="none" stroke="#6ab8f4" stroke-width="2"/><path d="M6 0v6l4-3z" fill="#3a8ae0" stroke="#1b5cb0" stroke-width="0.8"/><path d="M10 16v-6l-4 3z" fill="#3a8ae0" stroke="#1b5cb0" stroke-width="0.8"/></svg>
<svg style="left:70px;top:116px" width="15" height="14" viewBox="0 0 15 14"><path d="M0.5 0.5h14l-5 6v7h-4v-7z" fill="#9aa29a" stroke="#7a827a"/></svg>
<div class="a" style="left:89px;top:112px;width:22px;height:22px;background:#dfe5ee;border:1px solid #c0c8d4;border-radius:3px"></div>
<svg style="left:92px;top:115px" width="16" height="16" viewBox="0 0 16 16"><path d="M2 5h4v5h2l-4 5-4-5h2z" fill="#3a8ae0" stroke="#1a3a90"/><rect x="9" y="1" width="5" height="4" fill="#5ab0f0" stroke="#1a5aa0"/><path d="M11.5 6l3 3h-6z" fill="#4aa840"/><circle cx="11.5" cy="12.5" r="2.2" fill="#e86a2a"/></svg>
<svg style="left:115px;top:115px" width="16" height="16" viewBox="0 0 16 16"><rect x="0.5" y="0.5" width="10" height="8" fill="#cfe4fa" stroke="#2a6ad0"/><rect x="5.5" y="6.5" width="10" height="8" fill="#e4f0fc" stroke="#2a6ad0"/><path d="M8 10.5h5" stroke="#2a6ad0" stroke-width="2"/></svg>
<div class="a" style="left:391px;top:88px;width:114px;height:22px;background:#9db6d2;border-radius:4px 4px 0 0;border:1px solid #b4c6dc;border-bottom:none"></div>
<svg style="left:394px;top:91px" width="16" height="16" viewBox="0 0 16 16"><rect x="0" y="0" width="15" height="15" rx="1" fill="#e8401c"/><ellipse cx="7.5" cy="7.5" rx="5" ry="3" fill="none" stroke="#fff" stroke-width="1.8"/></svg>
<div class="t" style="left:413px;top:94.98px;font-size:11px;letter-spacing:-0.3px">Welcome Page</div>
<svg style="left:493px;top:96px" width="6" height="6" viewBox="0 0 6 6"><path d="M0.5 0.5l5 5M5.5 0.5l-5 5" stroke="#c4d2e2" stroke-width="1.3"/></svg>
<div class="a" style="left:506px;top:88px;width:182px;height:22px;background:linear-gradient(#fff,#f0f0f0);border-radius:3px 3px 0 0"></div>
<div class="a" style="left:506px;top:88px;width:182px;height:3px;background:#f7c47a;border-radius:3px 3px 0 0"></div>
<svg style="left:510px;top:91px" width="17" height="17" viewBox="0 0 17 17"><circle cx="7" cy="4.5" r="4" fill="#8ccc6a" stroke="#3a7a30"/><circle cx="3.5" cy="8.5" r="3" fill="#8ccc6a" stroke="#3a7a30"/><circle cx="6" cy="6" r="2" fill="#b8e4a0"/><rect x="3.5" y="8.5" width="12" height="7" fill="#fff" stroke="#1a1a1a"/><path d="M7.2 10.3H5.2v1.6h2v1.6h-2M8.5 10.3h2v3.2h-2zM10.2 13.5l0.8 0.8M12.2 10.3v3.2h2" stroke="#1a1a1a" stroke-width="0.9" fill="none"/></svg>
<div class="t" style="left:530px;top:94.68px;font-size:11px;font-style:italic">gdbtest2_odb1.app_kdp_v1</div>
<svg style="left:675px;top:96px" width="6" height="6" viewBox="0 0 6 6"><path d="M0.5 0.5l5 5M5.5 0.5l-5 5" stroke="#c8c8c8" stroke-width="1.3"/></svg>
<div class="a" style="left:1900px;top:91px;width:13px;height:13px;background:linear-gradient(#b0c4da,#98b0cc);border-radius:2px;border:1px solid #a8bcd4"></div>
<svg style="left:1903px;top:97px" width="8" height="5" viewBox="0 0 8 5"><path d="M0 0h7l-3.5 4z" fill="#fff"/></svg>
<div class="a" style="left:391px;top:110px;width:1526px;height:584px;background:#fff"></div>
<div class="a" style="left:391px;top:110px;width:1526px;height:28px;background:linear-gradient(#f2f1ef 0,#ececec 1px,#ececec 16px,#f6f6f6 17px,#fbfbfb 27px)"></div>
<div class="a" style="left:391px;top:138px;width:1526px;height:1px;background:#d4d4d4"></div>
<div class="a" style="left:391px;top:139px;width:1524px;height:1px;background:#7a7a7a"></div>
<div class="a" style="left:390px;top:110px;width:1px;height:29px;background:#b8c4d2"></div>
<div class="a" style="left:390px;top:139px;width:2px;height:555px;background:#808080"></div>
<div class="a" style="left:1916px;top:110px;width:1px;height:584px;background:#8c8c8c"></div>
<svg style="left:396px;top:116px" width="16" height="16" viewBox="0 0 16 16"><path d="M0.5 0.5l13 7-13 7z" fill="#43c23a" stroke="#1a6a18"/></svg>
<svg style="left:420px;top:116px" width="16" height="16" viewBox="0 0 16 16"><rect x="1.5" y="0.5" width="12" height="14" fill="#fff" stroke="#3a3f8a"/><path d="M3.5 3.5h8M3.5 6h8M3.5 8.5h8M3.5 11h8" stroke="#5a62b4"/><path d="M0.5 7l7.5 4-7.5 4z" fill="#43c23a" stroke="#1a6a18"/></svg>
<svg style="left:441px;top:116px" width="16" height="16" viewBox="0 0 16 16"><path d="M6.5 6v7a4.0 2.2 0 0 0 8 0v-7" fill="#8d93cc" stroke="#3a3f8a"/><ellipse cx="10.5" cy="6" rx="4.0" ry="2.2" fill="#e4e6f4" stroke="#3a3f8a"/><path d="M3 2v10h4M3 6h4" stroke="#2a7a2a" fill="none"/><rect x="0.5" y="0.5" width="4" height="3" fill="#f0b040" stroke="#8a5a10"/><rect x="5.5" y="4.5" width="4" height="3" fill="#f0b040" stroke="#8a5a10"/><rect x="5.5" y="10.5" width="4" height="3" fill="#f0b040" stroke="#8a5a10"/></svg>
<svg style="left:480px;top:116px" width="16" height="16" viewBox="0 0 16 16"><path d="M6.5 6v7a4.0 2.2 0 0 0 8 0v-7" fill="#8d93cc" stroke="#3a3f8a"/><ellipse cx="10.5" cy="6" rx="4.0" ry="2.2" fill="#e4e6f4" stroke="#3a3f8a"/><path d="M3 2v10h4M3 6h4" stroke="#2a7a2a" fill="none"/><rect x="0.5" y="0.5" width="4" height="3" fill="#f0b040" stroke="#8a5a10"/><rect x="5.5" y="4.5" width="4" height="3" fill="#f0b040" stroke="#8a5a10"/><path d="M0.5 7.5l7 4-7 4z" fill="#43c23a" stroke="#1a6a18"/></svg>
<svg style="left:504px;top:116px" width="16" height="16" viewBox="0 0 16 16"><path d="M1 3v9a5.5 2.2 0 0 0 11 0v-9" fill="#c8cce4" stroke="#5a5f90"/><ellipse cx="6.5" cy="3" rx="5.5" ry="2.2" fill="#eceef8" stroke="#5a5f90"/><path d="M9 9l5 5" stroke="#6a6a6a" stroke-width="2.5"/><circle cx="9" cy="9" r="2.5" fill="#e8e8e8" stroke="#6a6a6a"/></svg>
<svg style="left:536px;top:116px" width="16" height="16" viewBox="0 0 16 16"><path d="M1 3v9a5.5 2.2 0 0 0 11 0v-9" fill="#b8bde0" stroke="#4a4f90"/><ellipse cx="6.5" cy="3" rx="5.5" ry="2.2" fill="#eceef8" stroke="#4a4f90"/><path d="M6 10l3 3 6-7" stroke="#1a7a1a" stroke-width="3" fill="none"/><path d="M6 10l3 3 6-7" stroke="#4ac83a" stroke-width="1.5" fill="none"/></svg>
<svg style="left:560px;top:116px" width="16" height="16" viewBox="0 0 16 16"><path d="M1 3v9a5.5 2.2 0 0 0 11 0v-9" fill="#b8bde0" stroke="#4a4f90"/><ellipse cx="6.5" cy="3" rx="5.5" ry="2.2" fill="#eceef8" stroke="#4a4f90"/><path d="M8 12.5a3.5 3.5 0 1 1 6 1.5" stroke="#d85a1a" stroke-width="2.2" fill="none"/><path d="M6 11l3 0-1.5 3z" fill="#d85a1a"/></svg>
<svg style="left:593px;top:116px" width="16" height="16" viewBox="0 0 16 16"><circle cx="6" cy="4.5" r="4" fill="#8ccc6a" stroke="#3a7a30"/><circle cx="3.5" cy="8.5" r="3" fill="#8ccc6a" stroke="#3a7a30"/><circle cx="12" cy="4" r="3.5" fill="#f8b030" stroke="#d04010"/><rect x="3.5" y="8.5" width="12" height="7" fill="#fff" stroke="#1a1a1a"/><path d="M7.2 10.3H5.2v1.6h2v1.6h-2M8.5 10.3h2v3.2h-2zM10.2 13.5l0.8 0.8M12.2 10.3v3.2h2" stroke="#1a1a1a" stroke-width="0.9" fill="none"/></svg>
<svg style="left:616px;top:116px" width="16" height="16" viewBox="0 0 16 16"><path d="M1.5 12.5l9-10 4.5 4.5-10 9z" fill="#d8482a" stroke="#7a2a10"/><path d="M8 4.5l4.5 4.5 2.5-2.5-4.5-4.5z" fill="#f4d8a0" stroke="#8a6a30" stroke-width="0.6"/></svg>
<svg style="left:639px;top:116px" width="16" height="16" viewBox="0 0 16 16"><rect x="5.5" y="0.5" width="10" height="13" fill="#fff" stroke="#3a5aa0"/><path d="M7.5 4h6M7.5 7h6M7.5 10h6" stroke="#5a7ac0"/><circle cx="6" cy="10" r="5" fill="#e8f0fa" stroke="#2a70c8" stroke-width="1.5"/><path d="M6 7v3h2" stroke="#c02020"/></svg>
<svg style="left:662px;top:116px" width="16" height="16" viewBox="0 0 16 16"><text x="0" y="10" font-size="12" font-family="Liberation Serif" font-weight="bold" fill="#2a3a6a">Aa</text><path d="M3 13h10M3 13l2-2M3 13l2 2M13 13l-2-2M13 13l-2 2" stroke="#2a9a2a" stroke-width="1.5" fill="none"/></svg>
<svg style="left:466px;top:122px" width="9" height="5" viewBox="0 0 9 5"><path d="M0 0h8l-4 4z" fill="#6d70a8"/></svg>
<div class="a" style="left:529px;top:119px;width:1px;height:10px;background:#c0c0c0"></div>
<div class="a" style="left:585px;top:119px;width:1px;height:10px;background:#c0c0c0"></div>
<div class="a" style="left:687px;top:119px;width:1px;height:10px;background:#c0c0c0"></div>
<div class="a" style="left:1725px;top:113px;width:187px;height:23px;background:linear-gradient(#f4f4f4,#e0e0e0);border:1px solid #cfcfcf;border-radius:3px"></div>
<svg style="left:1732px;top:116px" width="16" height="16" viewBox="0 0 16 16"><ellipse cx="7.5" cy="12" rx="6.5" ry="2.5" fill="#8a93c4" stroke="#4d5590"/><rect x="1" y="3" width="13" height="9" fill="#c9cde8"/><path d="M1 3v9M14 3v9" stroke="#4d5590"/><path d="M1 6.5q6.5 3 13 0M1 9.5q6.5 3 13 0" stroke="#6a72aa" fill="none"/><ellipse cx="7.5" cy="3" rx="6.5" ry="2.5" fill="#e8eaf6" stroke="#4d5590"/><rect x="5" y="9" width="7" height="5" fill="#e8d84a" stroke="#2a6a2a"/><rect x="11" y="10" width="3" height="6" fill="#fff" stroke="#2a6a2a"/></svg>
<div class="t" style="left:1752px;top:119.18px;font-size:11px;">gdbtest2_odb1.app_kdp_v1</div>
<svg style="left:1896px;top:123px" width="8" height="5" viewBox="0 0 8 5"><path d="M0 0h8l-4 4z" fill="#6d70a8"/></svg>
<div class="a" style="left:392px;top:140px;width:1524px;height:21px;background:#ececec"></div>
<div class="a" style="left:392px;top:161px;width:1524px;height:1px;background:#fff"></div>
<div class="a" style="left:393px;top:141px;width:75px;height:21px;background:linear-gradient(#e4e4e4,#ececec);border:1px solid #d6d6d6;border-bottom:none;border-radius:2px 2px 0 0"></div>
<div class="t" style="left:396px;top:146.68px;font-size:11px;">Worksheet</div>
<div class="t" style="left:473px;top:147.68px;font-size:11px;">Query Builder</div>
<div class="a" style="left:392px;top:162px;width:1512px;height:241px;background:#fff;border:1px solid #888"></div>
<div class="a" style="left:393px;top:163px;width:29px;height:239px;background:#fff"></div>
<div class="a" style="left:422px;top:163px;width:1px;height:239px;background:#c8c8c8"></div>
<div class="a" style="left:434px;top:163px;width:1px;height:239px;border-left:1px dashed #c0c0c0"></div>
<div class="a" style="left:437px;top:165px;width:1464px;height:17px;background:#fff7e0"></div>
<div class="a" style="left:997px;top:165px;width:1px;height:237px;background:#b4b4b4"></div>
<div class="t m" style="left:437px;top:168.81px;font-size:12px;letter-spacing:-0.2px"><span style="color:#2060b0">SELECT</span> <span style="color:#2060b0">*</span> <span style="color:#2060b0">FROM</span> povrchy</div>
<svg style="left:437px;top:179px" width="42" height="3" viewBox="0 0 42 3"><path d="M0 2.5l1.75-2 1.75 2 1.75-2 1.75 2 1.75-2 1.75 2 1.75-2 1.75 2 1.75-2 1.75 2 1.75-2 1.75 2 1.75-2 1.75 2 1.75-2 1.75 2 1.75-2 1.75 2 1.75-2 1.75 2 1.75-2 1.75 2 1.75-2 1.75 2" stroke="#f4b400" fill="none" stroke-width="0.9"/></svg>
<svg style="left:486px;top:179px" width="8" height="3" viewBox="0 0 8 3"><path d="M0 2.5l1.75-2 1.75 2 1.75-2 1.75 2" stroke="#f4b400" fill="none" stroke-width="0.9"/></svg>
<div class="a" style="left:1904px;top:163px;width:10px;height:5px;background:#f8c020;border-bottom:1px solid #c06a10;border-right:1px solid #c06a10"></div>
<div class="a" style="left:392px;top:403px;width:1524px;height:7px;background:#ececec"></div>
<svg style="left:394px;top:403px" width="24" height="7" viewBox="0 0 24 7"><path d="M0.5 6.5l5-5.5 5 5.5z" fill="#000"/><path d="M11.5 0.5h10.5l-5.25 5.5z" fill="#000"/></svg>
<div class="a" style="left:392px;top:409px;width:1524px;height:1px;background:#7a7a7a"></div>
<div class="a" style="left:392px;top:410px;width:1524px;height:24px;background:#ececec"></div>
<div class="a" style="left:499px;top:411px;width:105px;height:23px;background:linear-gradient(#f6f6f6,#e6e6e6);border:1px solid #d8d8d8;border-bottom:none;border-radius:3px 3px 0 0"></div>
<svg style="left:397px;top:416px" width="15" height="16" viewBox="0 0 15 16"><rect x="1.5" y="0.5" width="12" height="14" fill="#fff" stroke="#8090c0"/><path d="M3.5 3h8M3.5 5.5h8M3.5 8h8M3.5 10.5h8" stroke="#a0b0d8"/><path d="M0.5 8l7 3.5-7 3.5z" fill="#9ad08a" stroke="#6a9a5a"/></svg>
<div class="t" style="left:413px;top:418.68px;font-size:11px;">Script Output</div>
<svg style="left:485px;top:420px" width="7" height="7" viewBox="0 0 7 7"><path d="M0.5 0.5l6 6M6.5 0.5l-6 6" stroke="#555" stroke-width="1.4"/></svg>
<svg style="left:503px;top:415px" width="14" height="14" viewBox="0 0 14 14"><path d="M0.5 0.5l13 6.5-13 6.5z" fill="#43c23a" stroke="#1a6a18"/></svg>
<div class="t" style="left:520px;top:418.18px;font-size:11px;">Query Result</div>
<svg style="left:591px;top:419px" width="7" height="7" viewBox="0 0 7 7"><path d="M0.5 0.5l6 6M6.5 0.5l-6 6" stroke="#555" stroke-width="1.4"/></svg>
<div class="a" style="left:392px;top:434px;width:1524px;height:26px;background:linear-gradient(#f8f8f8,#ececec 50%,#f6f6f6)"></div>
<div class="a" style="left:392px;top:433px;width:1524px;height:1px;background:#fff"></div>
<svg style="left:398px;top:439px" width="15" height="15" viewBox="0 0 15 15"><path d="M1 14l5-5" stroke="#222" stroke-width="1.3"/><circle cx="10" cy="5" r="4" fill="#d8401a" stroke="#8a2a0a"/><path d="M4 7l4 4" stroke="#d8401a" stroke-width="3"/></svg>
<svg style="left:420px;top:439px" width="16" height="16" viewBox="0 0 16 16"><rect x="3.5" y="0.5" width="9" height="7" fill="#fff" stroke="#5a62a8"/><path d="M5 3h6M5 5h6" stroke="#5a62a8"/><rect x="0.5" y="7.5" width="15" height="7" rx="2" fill="#d8d8d8" stroke="#707070"/><rect x="11" y="9" width="2" height="1" fill="#2a9a2a"/></svg>
<svg style="left:443px;top:439px" width="16" height="16" viewBox="0 0 16 16"><path d="M7.5 1.5a6 6 0 0 0-5 9.5" fill="none" stroke="#1b5cb0" stroke-width="3.6"/><path d="M7.5 1.5a6 6 0 0 0-5 9.5" fill="none" stroke="#6ab8f4" stroke-width="2"/><path d="M8.5 14.5a6 6 0 0 0 5-9.5" fill="none" stroke="#1b5cb0" stroke-width="3.6"/><path d="M8.5 14.5a6 6 0 0 0 5-9.5" fill="none" stroke="#6ab8f4" stroke-width="2"/><path d="M6 0v6l4-3z" fill="#3a8ae0" stroke="#1b5cb0" stroke-width="0.8"/><path d="M10 16v-6l-4 3z" fill="#3a8ae0" stroke="#1b5cb0" stroke-width="0.8"/></svg>
<svg style="left:466px;top:439px" width="16" height="16" viewBox="0 0 16 16"><rect x="0.5" y="0.5" width="10" height="12" fill="#fff" stroke="#5a62a8"/><path d="M2.5 3h6M2.5 5.5h6M2.5 8h6" stroke="#8a92cc"/><path d="M7 7l7 7M14 7l-7 7" stroke="#e84a1a" stroke-width="2.5"/></svg>
<div class="t" style="left:489px;top:440.98px;font-size:11px;color:#2a62c0">SQL</div>
<div class="a" style="left:517px;top:442px;width:1px;height:10px;background:#c8c8c8"></div>
<div class="t" style="left:526px;top:440.98px;font-size:11px;">Fetched 50 rows in 0,028 seconds</div>
<div class="a" style="left:392px;top:460px;width:1524px;height:1px;background:#7a7a7a"></div>
<div class="a" style="left:392px;top:461px;width:1523px;height:20px;background:#ececec"></div>
<div class="a" style="left:438px;top:480px;width:1465px;height:1px;background:#7a7a7a"></div>
<div class="a" style="left:392px;top:481px;width:1511px;height:199px;background:#fff"></div>
<div class="a" style="left:1915px;top:460px;width:1px;height:234px;background:#7a7a7a"></div>
<div class="a" style="left:392px;top:692px;width:1523px;height:1px;background:#7a7a7a"></div>
<div class="a" style="left:392px;top:693px;width:1523px;height:1px;background:#fff"></div>
<div class="a" style="left:390px;top:694px;width:1527px;height:1px;background:#808080"></div>
<div class="a" style="left:470px;top:461px;width:1px;height:20px;background:#8a8a8a"></div>
<div class="a" style="left:471px;top:461px;width:1px;height:19px;background:#f8f8f8"></div>
<div class="a" style="left:510px;top:461px;width:1px;height:20px;background:#8a8a8a"></div>
<div class="a" style="left:511px;top:461px;width:1px;height:19px;background:#f8f8f8"></div>
<div class="a" style="left:593px;top:461px;width:1px;height:20px;background:#8a8a8a"></div>
<div class="a" style="left:594px;top:461px;width:1px;height:19px;background:#f8f8f8"></div>
<div class="a" style="left:1256px;top:461px;width:1px;height:20px;background:#8a8a8a"></div>
<div class="a" style="left:1257px;top:461px;width:1px;height:19px;background:#f8f8f8"></div>
<div class="a" style="left:438px;top:461px;width:1px;height:19px;background:#f8f8f8"></div>
<svg style="left:440px;top:463px" width="9" height="17" viewBox="0 0 9 17"><path d="M4.5 0.5l3.5 5.5-2 2.5 2 2.5-3.5 5.5-3.5-5.5 2-2.5-2-2.5z" fill="#e4e4e4" stroke="#9a9a9a"/></svg>
<div class="t" style="left:451px;top:465.68px;font-size:11px;transform:scaleX(0.9);transform-origin:0 0">ID</div>
<svg style="left:474px;top:463px" width="9" height="17" viewBox="0 0 9 17"><path d="M4.5 0.5l3.5 5.5-2 2.5 2 2.5-3.5 5.5-3.5-5.5 2-2.5-2-2.5z" fill="#e4e4e4" stroke="#9a9a9a"/></svg>
<div class="t" style="left:485px;top:465.68px;font-size:11px;transform:scaleX(0.9);transform-origin:0 0">KOD</div>
<svg style="left:514px;top:463px" width="9" height="17" viewBox="0 0 9 17"><path d="M4.5 0.5l3.5 5.5-2 2.5 2 2.5-3.5 5.5-3.5-5.5 2-2.5-2-2.5z" fill="#e4e4e4" stroke="#9a9a9a"/></svg>
<div class="t" style="left:525px;top:465.68px;font-size:11px;transform:scaleX(0.9);transform-origin:0 0">KLASIFIKACE</div>
<svg style="left:597px;top:463px" width="9" height="17" viewBox="0 0 9 17"><path d="M4.5 0.5l3.5 5.5-2 2.5 2 2.5-3.5 5.5-3.5-5.5 2-2.5-2-2.5z" fill="#e4e4e4" stroke="#9a9a9a"/></svg>
<div class="t" style="left:608px;top:465.68px;font-size:11px;transform:scaleX(0.9);transform-origin:0 0">NAZEV</div>
<svg style="left:1260px;top:463px" width="9" height="17" viewBox="0 0 9 17"><path d="M4.5 0.5l3.5 5.5-2 2.5 2 2.5-3.5 5.5-3.5-5.5 2-2.5-2-2.5z" fill="#e4e4e4" stroke="#9a9a9a"/></svg>
<div class="t" style="left:1271px;top:465.68px;font-size:11px;transform:scaleX(0.9);transform-origin:0 0">POPIS</div>
<div class="a" style="left:392px;top:500px;width:1509px;height:1px;background:#eeeeee"></div>
<div class="t" style="left:392px;top:485.28px;width:42px;text-align:right;font-size:11px">1</div>
<div class="t m" style="left:439px;top:486.41px;font-size:12px;letter-spacing:-0.2px">P002</div>
<div class="t m" style="left:473px;top:486.41px;font-size:12px;letter-spacing:-0.2px">P002</div>
<div class="t m" style="left:514px;top:486.41px;font-size:12px;letter-spacing:-0.2px">(null)</div>
<div class="t m" style="left:595px;top:486.41px;font-size:12px;letter-spacing:-0.2px">ŽULOVÁ&nbsp;DLAŽBA&nbsp;VELKÁ&nbsp;KOSTKA&nbsp;-&nbsp;16C"Pražský&nbsp;normál"recyklovaná&nbsp;opotřebovaná&nbsp;mírně&nbsp;-&nbsp;II</div>
<div class="a" style="left:1258px;top:481px;width:643px;height:19px;overflow:hidden"><div class="t m" style="left:0;top:5.41px;font-size:12px;letter-spacing:-0.2px">Žulová&nbsp;dlažba&nbsp;z&nbsp;ručně&nbsp;opracovaných&nbsp;velkých&nbsp;kostek&nbsp;16C&nbsp;"Pražský&nbsp;normál"&nbsp;-&nbsp;recyklovaná&nbsp;-&nbsp;mírně</div></div>
<div class="a" style="left:392px;top:520px;width:1509px;height:1px;background:#eeeeee"></div>
<div class="t" style="left:392px;top:505.28px;width:42px;text-align:right;font-size:11px">2</div>
<div class="t m" style="left:439px;top:506.41px;font-size:12px;letter-spacing:-0.2px">P010</div>
<div class="t m" style="left:473px;top:506.41px;font-size:12px;letter-spacing:-0.2px">P010</div>
<div class="t m" style="left:514px;top:506.41px;font-size:12px;letter-spacing:-0.2px">(null)</div>
<div class="t m" style="left:595px;top:506.41px;font-size:12px;letter-spacing:-0.2px">ASFALT&nbsp;HUTNĚNÝ&nbsp;-&nbsp;PORÉZNÍ&nbsp;-&nbsp;PROPUSTNÝ&nbsp;VE&nbsp;HMOTĚ</div>
<div class="a" style="left:1258px;top:501px;width:643px;height:19px;overflow:hidden"><div class="t m" style="left:0;top:5.41px;font-size:12px;letter-spacing:-0.2px">např.&nbsp;Asfaltový&nbsp;koberec&nbsp;drenážni&nbsp;-&nbsp;PA8&nbsp;podle&nbsp;ČSN&nbsp;EN&nbsp;13108-7,&nbsp;mezerovitost&nbsp;14&nbsp;%&nbsp;až&nbsp;22%</div></div>
<div class="a" style="left:392px;top:540px;width:1509px;height:1px;background:#eeeeee"></div>
<div class="t" style="left:392px;top:525.28px;width:42px;text-align:right;font-size:11px">3</div>
<div class="t m" style="left:439px;top:526.41px;font-size:12px;letter-spacing:-0.2px">P008</div>
<div class="t m" style="left:473px;top:526.41px;font-size:12px;letter-spacing:-0.2px">P008</div>
<div class="t m" style="left:514px;top:526.41px;font-size:12px;letter-spacing:-0.2px">(null)</div>
<div class="t m" style="left:595px;top:526.41px;font-size:12px;letter-spacing:-0.2px">ASFALT&nbsp;HUTNĚNÝ&nbsp;ACO</div>
<div class="a" style="left:1258px;top:521px;width:643px;height:19px;overflow:hidden"><div class="t m" style="left:0;top:5.41px;font-size:12px;letter-spacing:-0.2px">Vozovka&nbsp;s&nbsp;asfaltovým&nbsp;krytem&nbsp;min.&nbsp;tl&nbsp;40mm&nbsp;dle&nbsp;TP170:&nbsp;D1-N-2-V-PIII</div></div>
<div class="a" style="left:392px;top:560px;width:1509px;height:1px;background:#eeeeee"></div>
<div class="t" style="left:392px;top:545.28px;width:42px;text-align:right;font-size:11px">4</div>
<div class="t m" style="left:439px;top:546.41px;font-size:12px;letter-spacing:-0.2px">P017</div>
<div class="t m" style="left:473px;top:546.41px;font-size:12px;letter-spacing:-0.2px">P017</div>
<div class="t m" style="left:514px;top:546.41px;font-size:12px;letter-spacing:-0.2px">(null)</div>
<div class="t m" style="left:595px;top:546.41px;font-size:12px;letter-spacing:-0.2px">TRAM&nbsp;Asfalt&nbsp;hutněný</div>
<div class="a" style="left:1258px;top:541px;width:643px;height:19px;overflow:hidden"><div class="t m" style="left:0;top:5.41px;font-size:12px;letter-spacing:-0.2px">B1&nbsp;v&nbsp;koncepci&nbsp;povrchů&nbsp;tramvajových&nbsp;tratí</div></div>
<div class="a" style="left:392px;top:580px;width:1509px;height:1px;background:#eeeeee"></div>
<div class="t" style="left:392px;top:565.28px;width:42px;text-align:right;font-size:11px">5</div>
<div class="t m" style="left:439px;top:566.41px;font-size:12px;letter-spacing:-0.2px">P052</div>
<div class="t m" style="left:473px;top:566.41px;font-size:12px;letter-spacing:-0.2px">P052</div>
<div class="t m" style="left:514px;top:566.41px;font-size:12px;letter-spacing:-0.2px">(null)</div>
<div class="t m" style="left:595px;top:566.41px;font-size:12px;letter-spacing:-0.2px">trvalkový&nbsp;záhon</div>
<div class="a" style="left:1258px;top:561px;width:643px;height:19px;overflow:hidden"><div class="t m" style="left:0;top:5.41px;font-size:12px;letter-spacing:-0.2px">použití&nbsp;v&nbsp;podrostech&nbsp;uličních&nbsp;stromořadíu&nbsp;parkovacích&nbsp;zálivův&nbsp;zasakovacích&nbsp;pásech&nbsp;u&nbsp;historic</div></div>
<div class="a" style="left:392px;top:600px;width:1509px;height:1px;background:#eeeeee"></div>
<div class="t" style="left:392px;top:585.28px;width:42px;text-align:right;font-size:11px">6</div>
<div class="t m" style="left:439px;top:586.41px;font-size:12px;letter-spacing:-0.2px">P015</div>
<div class="t m" style="left:473px;top:586.41px;font-size:12px;letter-spacing:-0.2px">P015</div>
<div class="t m" style="left:514px;top:586.41px;font-size:12px;letter-spacing:-0.2px">(null)</div>
<div class="t m" style="left:595px;top:586.41px;font-size:12px;letter-spacing:-0.2px">TRAM&nbsp;DROBNÁ&nbsp;KOSTKA&nbsp;ŠTÍPANÁ&nbsp;8/12</div>
<div class="a" style="left:1258px;top:581px;width:643px;height:19px;overflow:hidden"><div class="t m" style="left:0;top:5.41px;font-size:12px;letter-spacing:-0.2px">Žulová&nbsp;kostka&nbsp;drobná&nbsp;8/12&nbsp;-&nbsp;štípaná&nbsp;neopracovaná&nbsp;(ČSN&nbsp;EN&nbsp;1342),&nbsp;lokální&nbsp;dostupná&nbsp;žula&nbsp;různé</div></div>
<div class="a" style="left:392px;top:620px;width:1509px;height:1px;background:#eeeeee"></div>
<div class="t" style="left:392px;top:605.28px;width:42px;text-align:right;font-size:11px">7</div>
<div class="t m" style="left:439px;top:606.41px;font-size:12px;letter-spacing:-0.2px">P037</div>
<div class="t m" style="left:473px;top:606.41px;font-size:12px;letter-spacing:-0.2px">P037</div>
<div class="t m" style="left:514px;top:606.41px;font-size:12px;letter-spacing:-0.2px">(null)</div>
<div class="t m" style="left:595px;top:606.41px;font-size:12px;letter-spacing:-0.2px">Asfalt&nbsp;litý</div>
<div class="a" style="left:1258px;top:601px;width:643px;height:19px;overflow:hidden"><div class="t m" style="left:0;top:5.41px;font-size:12px;letter-spacing:-0.2px">TP&nbsp;170,&nbsp;+podíl&nbsp;recyklátu&nbsp;u&nbsp;plniva</div></div>
<div class="a" style="left:392px;top:640px;width:1509px;height:1px;background:#eeeeee"></div>
<div class="t" style="left:392px;top:625.28px;width:42px;text-align:right;font-size:11px">8</div>
<div class="t m" style="left:439px;top:626.41px;font-size:12px;letter-spacing:-0.2px">P030</div>
<div class="t m" style="left:473px;top:626.41px;font-size:12px;letter-spacing:-0.2px">P030</div>
<div class="t m" style="left:514px;top:626.41px;font-size:12px;letter-spacing:-0.2px">(null)</div>
<div class="t m" style="left:595px;top:626.41px;font-size:12px;letter-spacing:-0.2px">ŽULOVÁ&nbsp;DLAŽBA,&nbsp;VELKÁ&nbsp;ŘEZANÁ&nbsp;KOSTKA&nbsp;"PŮLENÁ"&nbsp;16/16-30/8&nbsp;(poloviční&nbsp;výška)</div>
<div class="a" style="left:1258px;top:621px;width:643px;height:19px;overflow:hidden"><div class="t m" style="left:0;top:5.41px;font-size:12px;letter-spacing:-0.2px">Žulová&nbsp;kostka&nbsp;velká&nbsp;16/16-30/8&nbsp;2.&nbsp;třída&nbsp;&nbsp;(ČSN&nbsp;EN&nbsp;1342)&nbsp;strojně&nbsp;opracovaná&nbsp;-&nbsp;řezaný&nbsp;tryskaný</div></div>
<div class="a" style="left:392px;top:660px;width:1509px;height:1px;background:#eeeeee"></div>
<div class="t" style="left:392px;top:645.28px;width:42px;text-align:right;font-size:11px">9</div>
<div class="t m" style="left:439px;top:646.41px;font-size:12px;letter-spacing:-0.2px">P011</div>
<div class="t m" style="left:473px;top:646.41px;font-size:12px;letter-spacing:-0.2px">P011</div>
<div class="t m" style="left:514px;top:646.41px;font-size:12px;letter-spacing:-0.2px">(null)</div>
<div class="t m" style="left:595px;top:646.41px;font-size:12px;letter-spacing:-0.2px">BETONOVÁ&nbsp;KOSTKA&nbsp;ZÁKLADNÍ&nbsp;-&nbsp;POJÍŽDITELNÁ&nbsp;12+t</div>
<div class="a" style="left:1258px;top:641px;width:643px;height:19px;overflow:hidden"><div class="t m" style="left:0;top:5.41px;font-size:12px;letter-spacing:-0.2px">přírodní&nbsp;materiál&nbsp;a&nbsp;barevnost,&nbsp;rádiusová&nbsp;mikrofazeta&nbsp;(r&lt;2mm),&nbsp;šířka&nbsp;spáry&nbsp;&lt;3mm,&nbsp;výplň&nbsp;F0/4mm</div></div>
<div class="a" style="left:392px;top:680px;width:1509px;height:1px;background:#eeeeee"></div>
<div class="t" style="left:392px;top:665.28px;width:42px;text-align:right;font-size:11px">10</div>
<div class="t m" style="left:439px;top:666.41px;font-size:12px;letter-spacing:-0.2px">P034</div>
<div class="t m" style="left:473px;top:666.41px;font-size:12px;letter-spacing:-0.2px">P034</div>
<div class="t m" style="left:514px;top:666.41px;font-size:12px;letter-spacing:-0.2px">(null)</div>
<div class="t m" style="left:595px;top:666.41px;font-size:12px;letter-spacing:-0.2px">CYKLOPÁS&nbsp;Žulová&nbsp;dlažba&nbsp;Kostka&nbsp;15/15/&gt;8&nbsp;cm&nbsp;řezaná,&nbsp;tryskaný&nbsp;líc,&nbsp;řezané&nbsp;boky&nbsp;s&nbsp;minimální&nbsp;spárou</div>
<div class="a" style="left:1258px;top:661px;width:643px;height:19px;overflow:hidden"><div class="t m" style="left:0;top:5.41px;font-size:12px;letter-spacing:-0.2px">Žulová&nbsp;dlažba&nbsp;Kostka&nbsp;&nbsp;15/15/&gt;8&nbsp;hladká&nbsp;řezaná&nbsp;tryskaná,&nbsp;řezané&nbsp;styčné&nbsp;plochy,&nbsp;spára&nbsp;na&nbsp;sraz,</div></div>
<div class="a" style="left:437px;top:481px;width:1px;height:199px;background:#eeeeee"></div>
<div class="a" style="left:470px;top:481px;width:1px;height:199px;background:#eeeeee"></div>
<div class="a" style="left:510px;top:481px;width:1px;height:199px;background:#eeeeee"></div>
<div class="a" style="left:593px;top:481px;width:1px;height:199px;background:#eeeeee"></div>
<div class="a" style="left:1256px;top:481px;width:1px;height:199px;background:#eeeeee"></div>
<div class="a" style="left:392px;top:680px;width:1523px;height:12px;background:#f0f0f0"></div>
<div class="a" style="left:392px;top:680px;width:45px;height:12px;background:#ececec"></div>
<svg style="left:442px;top:682px" width="6" height="8" viewBox="0 0 6 8"><path d="M5.5 0l-5 4 5 4z" fill="#c0c0c0"/></svg>
<div class="a" style="left:451px;top:681px;width:143px;height:10px;background:linear-gradient(#c8d6ea,#b6c8e2);border:1px solid #a8bcd8;border-radius:5px"></div>
<svg style="left:1891px;top:682px" width="6" height="8" viewBox="0 0 6 8"><path d="M0.5 0l5 4-5 4z" fill="#c0c0c0"/></svg>
<div class="a" style="left:1901px;top:481px;width:14px;height:199px;background:linear-gradient(90deg,#f0f0f0,#fafafa 40%,#ececec)"></div>
<svg style="left:1904px;top:484px" width="10" height="5" viewBox="0 0 10 5"><path d="M0 5l5-5 5 5z" fill="#c8c8c8"/></svg>
<div class="a" style="left:1904px;top:494px;width:10px;height:18px;background:linear-gradient(90deg,#c2d2ea,#d8e2f0);border:1px solid #b0c2dc;border-radius:5px"></div>
<svg style="left:1904px;top:668px" width="10" height="5" viewBox="0 0 10 5"><path d="M0 0l5 5 5-5z" fill="#c8c8c8"/></svg>
<div class="a" style="left:390px;top:699px;width:1527px;height:307px;background:#fff;border-radius:4px 4px 0 0"></div>
<div class="a" style="left:390px;top:709px;width:1527px;height:12px;background:#ebebeb"></div>
<div class="t" style="left:398px;top:704.68px;font-size:11px;">Messages - Log</div>
<svg style="left:1876px;top:706px" width="8" height="8" viewBox="0 0 8 8"><path d="M1 1l6 6M7 1l-6 6" stroke="#c0c0c0" stroke-width="1.2"/></svg>
<div class="a" style="left:1887px;top:702px;width:1px;height:15px;background:#c8c8c8"></div>
<svg style="left:1899px;top:705px" width="10" height="9" viewBox="0 0 10 9"><rect x="0.5" y="0.5" width="9" height="8" fill="#fff" stroke="#9a9f9a"/><rect x="2.5" y="5" width="5" height="2" fill="#9a9f9a"/></svg>
<div class="a" style="left:1897px;top:990px;width:15px;height:14px;background:linear-gradient(#f8f8f8,#e4e4e4);border-radius:2px"></div>
<svg style="left:1900px;top:995px" width="9" height="5" viewBox="0 0 9 5"><path d="M0 0h8l-4 4z" fill="#2a2a6a"/></svg>
<div class="a" style="left:390px;top:987px;width:67px;height:19px;background:#fff;border-right:1px solid #b8b8b8;box-shadow:1px 0 1px #ddd"></div>
<div class="t" style="left:394px;top:991.68px;font-size:11px;">Messages</div>
<div class="a" style="left:458px;top:988px;width:84px;height:18px;background:linear-gradient(#fdf2d2,#f9e0a8);border:1px solid #efd9a8;border-bottom:none"></div>
<div class="t" style="left:461px;top:991.68px;font-size:11px;">Logging Page</div>
<svg style="left:533px;top:993px" width="5" height="5" viewBox="0 0 5 5"><path d="M0.5 0.5l4 4M4.5 0.5l-4 4" stroke="#b0a080"/></svg>
<div class="a" style="left:543px;top:988px;width:77px;height:18px;background:linear-gradient(#fdf2d2,#f9e0a8);border:1px solid #efd9a8;border-bottom:none"></div>
<div class="t" style="left:547px;top:991.68px;font-size:11px;">Statements</div>
<svg style="left:610px;top:993px" width="5" height="5" viewBox="0 0 5 5"><path d="M0.5 0.5l4 4M4.5 0.5l-4 4" stroke="#b0a080"/></svg>
<div class="a" style="left:0px;top:1006px;width:1920px;height:1px;background:#90aecc"></div>
<div class="a" style="left:0px;top:1031px;width:1920px;height:1px;background:#90aecc"></div>
<div class="t" style="left:1619px;top:1013.68px;font-size:11px;color:#f4f7fb;letter-spacing:-0.35px">|</div>
<div class="t" style="left:1627px;top:1013.68px;font-size:11px;color:#f4f7fb;letter-spacing:-0.35px">Line 1 Column 22</div>
<div class="t" style="left:1735px;top:1013.68px;font-size:11px;color:#f4f7fb;letter-spacing:-0.35px">|</div>
<div class="t" style="left:1743px;top:1013.68px;font-size:11px;color:#f4f7fb;letter-spacing:0">Insert</div>
<div class="t" style="left:1797px;top:1013.68px;font-size:11px;color:#f4f7fb;letter-spacing:-0.35px">|</div>
<div class="t" style="left:1804px;top:1013.68px;font-size:11px;color:#f4f7fb;letter-spacing:-0.35px">Modified</div>
<div class="t" style="left:1847px;top:1013.68px;font-size:11px;color:#f4f7fb;letter-spacing:-0.35px">|</div>
<div class="t" style="left:1855px;top:1013.68px;font-size:11px;color:#f4f7fb;letter-spacing:-0.35px">Windows: CF</div>
<div class="a" style="left:0px;top:1032px;width:1920px;height:48px;background:#e2eaf5"></div>
<div class="a" style="left:0px;top:1032px;width:1920px;height:1px;background:#d6def0"></div>
<div class="a" style="left:1249px;top:1036px;width:40px;height:40px;background:#fbe4e6;border-radius:4px"></div>
<div class="a" style="left:1294px;top:1036px;width:38px;height:40px;background:#edf1f7;border-radius:4px;border:1px solid #dde4ee"></div>
<svg style="left:552.5px;top:1044px" width="24" height="24" viewBox="0 0 24 24"><rect x="1" y="1" width="11" height="11" fill="#3aa8ec"/><rect x="13" y="1" width="11" height="11" fill="#2e94e4"/><rect x="1" y="13" width="11" height="11" fill="#2a8ce0"/><rect x="13" y="13" width="11" height="11" fill="#1e78d4"/></svg>
<svg style="left:596.5px;top:1044px" width="24" height="24" viewBox="0 0 24 24"><circle cx="13" cy="9" r="7" fill="#e4ecf4" stroke="#1a2a20" stroke-width="2"/><path d="M8 14l-6 6" stroke="#1a1a2a" stroke-width="2.6" stroke-linecap="round"/></svg>
<svg style="left:640.5px;top:1044px" width="24" height="24" viewBox="0 0 24 24"><rect x="1" y="7" width="17" height="16" fill="#1e3a28"/><rect x="7" y="1" width="17" height="16" fill="#f0f0f0" opacity="0.92"/><rect x="7" y="7" width="11" height="10" fill="#b8b8b8"/></svg>
<svg style="left:684.5px;top:1044px" width="24" height="24" viewBox="0 0 24 24"><rect x="0.5" y="1.5" width="23" height="21" fill="#1e6ac0"/><rect x="2.5" y="3.5" width="8" height="17" rx="1" fill="#f4f4f4"/><rect x="12.5" y="3.5" width="9" height="12" fill="#6cc0ee"/><rect x="12.5" y="16" width="9" height="4.5" fill="#3a9ae0"/></svg>
<svg style="left:728.5px;top:1044px" width="24" height="24" viewBox="0 0 24 24"><circle cx="12" cy="11" r="11" fill="#7a8ad8"/><path d="M2 22l3-6 4 4z" fill="#6a7ac8"/><rect x="5" y="7" width="9" height="8" rx="1" fill="#fff"/><path d="M14 10l5-3v9l-5-3z" fill="#fff"/></svg>
<svg style="left:772.5px;top:1044px" width="24" height="24" viewBox="0 0 24 24"><path d="M0.5 2h9l2 2h12v18h-23z" fill="#e8a84a"/><rect x="0.5" y="5" width="23" height="17" fill="#fcd25c"/><rect x="4" y="14" width="16" height="8" rx="1" fill="#2a78d0"/></svg>
<div class="a" style="left:781.5px;top:1072px;width:6px;height:3px;border-radius:2px;background:#6e6e6e"></div>
<svg style="left:816.5px;top:1044px" width="24" height="24" viewBox="0 0 24 24"><circle cx="12" cy="12" r="11.5" fill="#2a7ad4"/><path d="M12 0.5a11.5 11.5 0 0 1 11.5 11.5c0 4-3 6-6 6s-5-1-5-3 2-3 3-3" fill="#56c45a"/><circle cx="13" cy="13" r="3.5" fill="#e0e9f4"/><path d="M3 17q5 6 11 5" stroke="#1a5ab0" stroke-width="2" fill="none"/></svg>
<div class="a" style="left:825.5px;top:1072px;width:6px;height:3px;border-radius:2px;background:#6e6e6e"></div>
<svg style="left:860.5px;top:1044px" width="24" height="24" viewBox="0 0 24 24"><rect x="0.5" y="5" width="23" height="18" rx="3" fill="#2a5aa8"/><path d="M6 6v-4h12v4" stroke="#3aa0ea" stroke-width="2" fill="none"/><rect x="7" y="9" width="4.5" height="4.5" fill="#f05030"/><rect x="12.5" y="9" width="4.5" height="4.5" fill="#70c040"/><rect x="7" y="14.5" width="4.5" height="4.5" fill="#30a8f0"/><rect x="12.5" y="14.5" width="4.5" height="4.5" fill="#f8c020"/></svg>
<svg style="left:904.5px;top:1044px" width="24" height="24" viewBox="0 0 24 24"><path d="M3 3h21l-4 18h-20z" fill="#1c1a40"/><path d="M5 7l6 4-7 5" stroke="#fff" stroke-width="2.2" fill="none"/><path d="M11 17h6" stroke="#fff" stroke-width="2"/></svg>
<svg style="left:948.5px;top:1044px" width="24" height="24" viewBox="0 0 24 24"><path d="M17 0.5l6 3v17l-6 3-10-10z" fill="#1e8ae0"/><path d="M17 0.5v23l6-3v-17z" fill="#36a8f0"/><path d="M17 5l-10 8-4-3-2 1 4 4-4 4 2 1 4-3 10 8" stroke="#0a64c0" stroke-width="2.8" fill="none"/></svg>
<div class="a" style="left:957.5px;top:1072px;width:6px;height:3px;border-radius:2px;background:#6e6e6e"></div>
<svg style="left:992.5px;top:1044px" width="24" height="24" viewBox="0 0 24 24"><rect x="0" y="0" width="24" height="24" fill="#e85a24"/><circle cx="12" cy="12" r="6.5" fill="none" stroke="#fff" stroke-width="2"/><circle cx="6" cy="12" r="2.3" fill="#fff"/><circle cx="15.5" cy="6.5" r="2.3" fill="#fff"/><circle cx="15.5" cy="17.5" r="2.3" fill="#fff"/></svg>
<div class="a" style="left:1001.5px;top:1072px;width:6px;height:3px;border-radius:2px;background:#6e6e6e"></div>
<svg style="left:1036.5px;top:1044px" width="24" height="24" viewBox="0 0 24 24"><rect x="0.5" y="0.5" width="23" height="23" fill="#3a78d0"/><path d="M0.5 23.5l8-12 6 7 4-4 5 9z" fill="#1c3a88"/><circle cx="17" cy="6" r="2" fill="#fff"/></svg>
<div class="a" style="left:1045.5px;top:1072px;width:6px;height:3px;border-radius:2px;background:#6e6e6e"></div>
<svg style="left:1080.5px;top:1044px" width="24" height="24" viewBox="0 0 24 24"><rect x="1.5" y="2" width="21" height="20" fill="#58b4f0"/><path d="M4 1v3M8 1v3M12 1v3M16 1v3M20 1v3" stroke="#1a4a90" stroke-width="1.3"/><path d="M5 9h14M5 13h14M5 17h14" stroke="#1a4a90" stroke-width="2"/><rect x="1.5" y="21" width="21" height="2" fill="#b05a20"/></svg>
<div class="a" style="left:1089.5px;top:1072px;width:6px;height:3px;border-radius:2px;background:#6e6e6e"></div>
<svg style="left:1124.5px;top:1044px" width="24" height="24" viewBox="0 0 24 24"><circle cx="12" cy="12" r="11.5" fill="#e34234"/><path d="M12 12L1.9 17.8A11.5 11.5 0 0 0 15 23.1z" fill="#2da94f"/><path d="M12 12l10.5-5A11.5 11.5 0 0 1 12 23.5z" fill="#fbc116"/><circle cx="12" cy="12" r="5.5" fill="#fff"/><circle cx="12" cy="12" r="4.3" fill="#2a7ae0"/></svg>
<div class="a" style="left:1133.5px;top:1072px;width:6px;height:3px;border-radius:2px;background:#6e6e6e"></div>
<svg style="left:1168.5px;top:1044px" width="24" height="24" viewBox="0 0 24 24"><rect x="6" y="1" width="18" height="22" fill="#1e7a44"/><rect x="6" y="8" width="18" height="15" fill="#185a34"/><rect x="0" y="6" width="12" height="12" fill="#10572c"/><path d="M3 9l6 6M9 9l-6 6" stroke="#fff" stroke-width="2"/></svg>
<div class="a" style="left:1177.5px;top:1072px;width:6px;height:3px;border-radius:2px;background:#6e6e6e"></div>
<svg style="left:1212.5px;top:1044px" width="24" height="24" viewBox="0 0 24 24"><rect x="7" y="1" width="17" height="20" fill="#1e78d4"/><rect x="13" y="1" width="11" height="7" fill="#36a0ee"/><path d="M7 12l17 0v11h-17z" fill="#2a8ae0"/><rect x="0" y="5" width="12" height="13" fill="#0c5ab8"/><circle cx="6" cy="11.5" r="3.4" fill="none" stroke="#fff" stroke-width="1.8"/></svg>
<div class="a" style="left:1221.5px;top:1072px;width:6px;height:3px;border-radius:2px;background:#6e6e6e"></div>
<svg style="left:1256.5px;top:1044px" width="24" height="24" viewBox="0 0 24 24"><path d="M1 1l5 1v15l-5-2z" fill="#0a3a90"/><rect x="4" y="2" width="16" height="13" fill="#3a70c0"/><rect x="7" y="4" width="11" height="9" fill="#b8d4f0"/><ellipse cx="10" cy="21" rx="6" ry="2" fill="#bbb"/><circle cx="18" cy="18" r="5.5" fill="#6a6a6a" stroke="#e0e0e0"/><path d="M15.5 17l2 1.5-2 1.5M20.5 16l-2 1.5 2 1.5" stroke="#4ac04a" fill="none"/></svg>
<div class="a" style="left:1265.5px;top:1072px;width:6px;height:3px;border-radius:2px;background:#d8402a"></div>
<svg style="left:1300.5px;top:1044px" width="24" height="24" viewBox="0 0 24 24"><rect x="1.5" y="1.5" width="17" height="19" fill="#dce6f4" stroke="#5a7ac0"/><path d="M1.5 7h17M1.5 13h17M8 1.5v19" stroke="#5a7ac0"/><circle cx="16.5" cy="16" r="7" fill="#22a82a"/><path d="M14 12.5l6 3.5-6 3.5z" fill="#fff"/></svg>
<div class="a" style="left:1304.5px;top:1072px;width:16px;height:3px;border-radius:2px;background:#1a6ad0"></div>
<svg style="left:1344.5px;top:1044px" width="24" height="24" viewBox="0 0 24 24"><path d="M12 1c6 0 11 4 11 9 0 3-2 4-4 4s-3 1-3 3-1 6-6 6C4 23 1 17 1 12S5 1 12 1z" fill="#3aa0e8"/><circle cx="7" cy="8" r="2" fill="#e8402a"/><circle cx="12" cy="5" r="2" fill="#50b040"/><circle cx="17" cy="5.5" r="2" fill="#f8c020"/><path d="M19 8l1 15" stroke="#c08030" stroke-width="2"/></svg>
<div class="a" style="left:1353.5px;top:1072px;width:6px;height:3px;border-radius:2px;background:#6e6e6e"></div>
<svg style="left:1667px;top:1052px" width="13" height="8" viewBox="0 0 13 8"><path d="M0.5 7l6-6 6 6" stroke="#222" stroke-width="1.2" fill="none"/></svg>
<div class="t" style="left:1695px;top:1050.84px;font-size:12px;color:#1a1a1a">ENG</div>
<svg style="left:1737px;top:1049px" width="17" height="16" viewBox="0 0 17 16"><rect x="0.5" y="2.5" width="12" height="9" fill="none" stroke="#222"/><path d="M6.5 11.5v3M3 14.5h7" stroke="#222"/><rect x="11.5" y="0.5" width="4" height="7" rx="1" fill="#e0e9f4" stroke="#222"/></svg>
<svg style="left:1761px;top:1050px" width="17" height="14" viewBox="0 0 17 14"><path d="M1 5h3l4-4v12l-4-4h-3z" fill="none" stroke="#222"/><path d="M10.5 4q2 3 0 6M13 2q3.5 5 0 10" stroke="#999" fill="none"/></svg>
<svg style="left:1785px;top:1051px" width="17" height="12" viewBox="0 0 17 12"><rect x="0.5" y="1.5" width="13" height="8" rx="1.5" fill="none" stroke="#222" stroke-width="1.2"/><rect x="2" y="3" width="10" height="5" fill="#222"/><rect x="14" y="4" width="1.5" height="3" fill="#222"/></svg>
<div class="t" style="left:1800px;top:1042.3px;width:72px;text-align:right;font-size:11.5px;color:#1a1a1a">18:22</div>
<div class="t" style="left:1800px;top:1058.3px;width:72px;text-align:right;font-size:11.5px;color:#1a1a1a">17.07.2022</div>
<div class="a" style="left:1884px;top:1048px;width:16px;height:16px;border-radius:8px;background:#1066c0"></div>
<div class="t" style="left:1888.5px;top:1050.26px;font-size:11.5px;color:#fff">2</div>
</body></html>
